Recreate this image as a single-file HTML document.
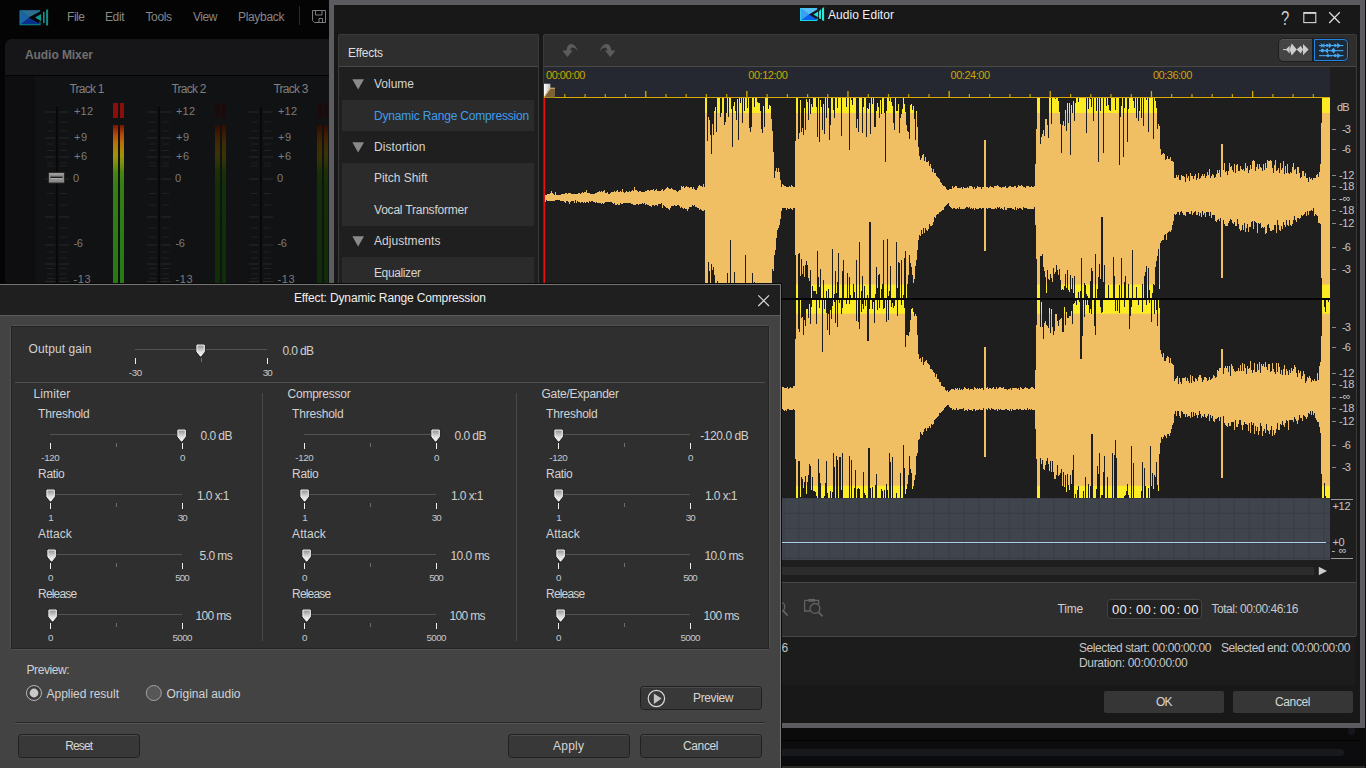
<!DOCTYPE html>
<html lang="en"><head><meta charset="utf-8"><title>Audio Editor</title>
<style>
html,body{margin:0;padding:0;background:#040404;}
body{width:1366px;height:768px;overflow:hidden;position:relative;font-family:"Liberation Sans",sans-serif;}
#root{position:absolute;left:0;top:0;width:1366px;height:768px;overflow:hidden;background:#040404;}
#root div,#root span.t,#root svg{position:absolute;}
span.t{white-space:pre;line-height:1;}
</style></head><body><div id="root">

<!-- main application window (dimmed) -->
<svg style="left:19px;top:8px" width="30" height="19" viewBox="0 0 30 19">
<rect x="1" y="2.2" width="20" height="14.4" fill="#082f8a"/>
<polygon points="1,2.2 21,2.2 21,5.4 10.5,9.6" fill="#2a7191"/>
<polygon points="1,2.2 10.5,9.6 1,16.6" fill="#1c62a6"/>
<polygon points="21,3.4 21,15.8 9.6,9.6" fill="#050505"/>
<polygon points="22.2,6 22.2,13.2 16,9.6" fill="#0f968f"/>
<path d="M0.8,16.7H21V13.4" fill="none" stroke="#0f8f96" stroke-width="1.1"/>
<path d="M1,2.2V16.8" fill="none" stroke="#187c96" stroke-width="1"/>
<rect x="24" y="3.8" width="1.6" height="11.3" fill="#0f9094"/>
<rect x="27.1" y="1.5" width="2" height="16" fill="#1a8a86"/>
</svg>
<span class="t" style="left:67.00px;top:11.14px;font-size:12px;color:#878787;letter-spacing:-0.440px;">File</span>
<span class="t" style="left:105.00px;top:11.14px;font-size:12px;color:#878787;letter-spacing:-0.400px;">Edit</span>
<span class="t" style="left:145.50px;top:11.14px;font-size:12px;color:#878787;letter-spacing:-0.380px;">Tools</span>
<span class="t" style="left:193.00px;top:11.14px;font-size:12px;color:#878787;letter-spacing:-0.433px;">View</span>
<span class="t" style="left:238.00px;top:11.14px;font-size:12px;color:#878787;letter-spacing:-0.326px;">Playback</span>
<div style="left:299px;top:6px;width:1px;height:19px;background:#2a2a2a;"></div>
<svg style="left:312px;top:10px" width="14" height="13" viewBox="0 0 14 13">
<path d="M0.5,0.5 H13.5 V12.5 H2.5 L0.5,10.5 Z M3.5,0.5 V5 H10 V0.5 M7,12.5 V8.5 H10.5 V12.5" fill="none" stroke="#7e7e7e" stroke-width="1"/>
</svg>
<div style="left:5px;top:39px;width:330px;height:250px;background:#0e0e10;border-radius:7px 0 0 0;"></div>
<div style="left:5px;top:39px;width:330px;height:36px;background:#161618;border-radius:7px 0 0 0;"></div>
<div style="left:5px;top:74.6px;width:330px;height:1.3px;background:#030303;"></div>
<div style="left:35px;top:76px;width:300px;height:212px;background:#111214;"></div>
<span class="t" style="left:25.00px;top:48.84px;font-size:12px;color:#707070;letter-spacing:-0.070px;font-weight:700;">Audio Mixer</span>
<span class="t" style="left:69.50px;top:82.84px;font-size:12px;color:#808080;letter-spacing:-0.790px;">Track 1</span>
<span class="t" style="left:74.00px;top:105.69px;font-size:11px;color:#7c7c7c;letter-spacing:0.178px;">+12</span>
<span class="t" style="left:74.00px;top:131.69px;font-size:11px;color:#7c7c7c;letter-spacing:0.460px;">+9</span>
<span class="t" style="left:74.00px;top:150.69px;font-size:11px;color:#7c7c7c;letter-spacing:0.460px;">+6</span>
<span class="t" style="left:73.00px;top:173.19px;font-size:11px;color:#7c7c7c;">0</span>
<span class="t" style="left:73.50px;top:237.69px;font-size:11px;color:#7c7c7c;letter-spacing:-0.290px;">-6</span>
<span class="t" style="left:73.50px;top:274.19px;font-size:11px;color:#7c7c7c;letter-spacing:0.553px;">-13</span>
<div style="left:56px;top:106.5px;width:2px;height:180px;background:#09090a;"></div>
<svg style="left:0;top:0" width="340" height="284" fill="#28292a"><rect x="45" y="111.5" width="10" height="1" /><rect x="59" y="111.5" width="10" height="1" /><rect x="45" y="137.5" width="10" height="1" /><rect x="59" y="137.5" width="10" height="1" /><rect x="45" y="156.5" width="10" height="1" /><rect x="59" y="156.5" width="10" height="1" /><rect x="45" y="178.5" width="10" height="1" /><rect x="59" y="178.5" width="10" height="1" /><rect x="45" y="216.5" width="10" height="1" /><rect x="59" y="216.5" width="10" height="1" /><rect x="45" y="244.5" width="10" height="1" /><rect x="59" y="244.5" width="10" height="1" /><rect x="45" y="263.5" width="10" height="1" /><rect x="59" y="263.5" width="10" height="1" /><rect x="45" y="281" width="10" height="1" /><rect x="59" y="281" width="10" height="1" /><rect x="47" y="121.5" width="7" height="1" opacity=".7"/><rect x="60" y="121.5" width="7" height="1" opacity=".7"/><rect x="47" y="130.5" width="7" height="1" opacity=".7"/><rect x="60" y="130.5" width="7" height="1" opacity=".7"/><rect x="47" y="143.5" width="7" height="1" opacity=".7"/><rect x="60" y="143.5" width="7" height="1" opacity=".7"/><rect x="47" y="150" width="7" height="1" opacity=".7"/><rect x="60" y="150" width="7" height="1" opacity=".7"/><rect x="47" y="162.5" width="7" height="1" opacity=".7"/><rect x="60" y="162.5" width="7" height="1" opacity=".7"/><rect x="47" y="165.5" width="7" height="1" opacity=".7"/><rect x="60" y="165.5" width="7" height="1" opacity=".7"/><rect x="47" y="193" width="7" height="1" opacity=".7"/><rect x="60" y="193" width="7" height="1" opacity=".7"/><rect x="47" y="204.5" width="7" height="1" opacity=".7"/><rect x="60" y="204.5" width="7" height="1" opacity=".7"/><rect x="47" y="227.5" width="7" height="1" opacity=".7"/><rect x="60" y="227.5" width="7" height="1" opacity=".7"/><rect x="47" y="236.5" width="7" height="1" opacity=".7"/><rect x="60" y="236.5" width="7" height="1" opacity=".7"/><rect x="47" y="251.5" width="7" height="1" opacity=".7"/><rect x="60" y="251.5" width="7" height="1" opacity=".7"/><rect x="47" y="257.5" width="7" height="1" opacity=".7"/><rect x="60" y="257.5" width="7" height="1" opacity=".7"/><rect x="47" y="268" width="7" height="1" opacity=".7"/><rect x="60" y="268" width="7" height="1" opacity=".7"/><rect x="47" y="273.5" width="7" height="1" opacity=".7"/><rect x="60" y="273.5" width="7" height="1" opacity=".7"/><rect x="47" y="278" width="7" height="1" opacity=".7"/><rect x="60" y="278" width="7" height="1" opacity=".7"/></svg>
<div style="left:113px;top:103px;width:4.5px;height:14.5px;background:#8a0f0c;"></div>
<div style="left:113px;top:124.5px;width:4.5px;height:160px;background:linear-gradient(to bottom,#7a1404 0px,#b04608 9px,#b87208 18px,#a49209 30px,#7f900e 38px,#488612 47px,#357f14 60px,#2c7d15 110px,#287814 160px);"></div>
<div style="left:119.5px;top:103px;width:4.5px;height:14.5px;background:#8a0f0c;"></div>
<div style="left:119.5px;top:124.5px;width:4.5px;height:160px;background:linear-gradient(to bottom,#7a1404 0px,#b04608 9px,#b87208 18px,#a49209 30px,#7f900e 38px,#488612 47px,#357f14 60px,#2c7d15 110px,#287814 160px);"></div>
<span class="t" style="left:171.50px;top:82.84px;font-size:12px;color:#808080;letter-spacing:-0.790px;">Track 2</span>
<span class="t" style="left:176.00px;top:105.69px;font-size:11px;color:#7c7c7c;letter-spacing:0.178px;">+12</span>
<span class="t" style="left:176.00px;top:131.69px;font-size:11px;color:#7c7c7c;letter-spacing:0.460px;">+9</span>
<span class="t" style="left:176.00px;top:150.69px;font-size:11px;color:#7c7c7c;letter-spacing:0.460px;">+6</span>
<span class="t" style="left:175.00px;top:173.19px;font-size:11px;color:#7c7c7c;">0</span>
<span class="t" style="left:175.50px;top:237.69px;font-size:11px;color:#7c7c7c;letter-spacing:-0.290px;">-6</span>
<span class="t" style="left:175.50px;top:274.19px;font-size:11px;color:#7c7c7c;letter-spacing:0.553px;">-13</span>
<div style="left:158px;top:106.5px;width:2px;height:180px;background:#09090a;"></div>
<svg style="left:0;top:0" width="340" height="284" fill="#28292a"><rect x="147" y="111.5" width="10" height="1" /><rect x="161" y="111.5" width="10" height="1" /><rect x="147" y="137.5" width="10" height="1" /><rect x="161" y="137.5" width="10" height="1" /><rect x="147" y="156.5" width="10" height="1" /><rect x="161" y="156.5" width="10" height="1" /><rect x="147" y="178.5" width="10" height="1" /><rect x="161" y="178.5" width="10" height="1" /><rect x="147" y="216.5" width="10" height="1" /><rect x="161" y="216.5" width="10" height="1" /><rect x="147" y="244.5" width="10" height="1" /><rect x="161" y="244.5" width="10" height="1" /><rect x="147" y="263.5" width="10" height="1" /><rect x="161" y="263.5" width="10" height="1" /><rect x="147" y="281" width="10" height="1" /><rect x="161" y="281" width="10" height="1" /><rect x="149" y="121.5" width="7" height="1" opacity=".7"/><rect x="162" y="121.5" width="7" height="1" opacity=".7"/><rect x="149" y="130.5" width="7" height="1" opacity=".7"/><rect x="162" y="130.5" width="7" height="1" opacity=".7"/><rect x="149" y="143.5" width="7" height="1" opacity=".7"/><rect x="162" y="143.5" width="7" height="1" opacity=".7"/><rect x="149" y="150" width="7" height="1" opacity=".7"/><rect x="162" y="150" width="7" height="1" opacity=".7"/><rect x="149" y="162.5" width="7" height="1" opacity=".7"/><rect x="162" y="162.5" width="7" height="1" opacity=".7"/><rect x="149" y="165.5" width="7" height="1" opacity=".7"/><rect x="162" y="165.5" width="7" height="1" opacity=".7"/><rect x="149" y="193" width="7" height="1" opacity=".7"/><rect x="162" y="193" width="7" height="1" opacity=".7"/><rect x="149" y="204.5" width="7" height="1" opacity=".7"/><rect x="162" y="204.5" width="7" height="1" opacity=".7"/><rect x="149" y="227.5" width="7" height="1" opacity=".7"/><rect x="162" y="227.5" width="7" height="1" opacity=".7"/><rect x="149" y="236.5" width="7" height="1" opacity=".7"/><rect x="162" y="236.5" width="7" height="1" opacity=".7"/><rect x="149" y="251.5" width="7" height="1" opacity=".7"/><rect x="162" y="251.5" width="7" height="1" opacity=".7"/><rect x="149" y="257.5" width="7" height="1" opacity=".7"/><rect x="162" y="257.5" width="7" height="1" opacity=".7"/><rect x="149" y="268" width="7" height="1" opacity=".7"/><rect x="162" y="268" width="7" height="1" opacity=".7"/><rect x="149" y="273.5" width="7" height="1" opacity=".7"/><rect x="162" y="273.5" width="7" height="1" opacity=".7"/><rect x="149" y="278" width="7" height="1" opacity=".7"/><rect x="162" y="278" width="7" height="1" opacity=".7"/></svg>
<div style="left:215px;top:103px;width:4.5px;height:14.5px;background:#1d0a0a;"></div>
<div style="left:215px;top:124.5px;width:4.5px;height:160px;background:linear-gradient(to bottom,#330a02 0px,#3d1c03 9px,#3f2a03 18px,#3a3304 30px,#2c3305 38px,#1a3006 47px,#132f07 60px,#0f2d08 160px);"></div>
<div style="left:221.5px;top:103px;width:4.5px;height:14.5px;background:#1d0a0a;"></div>
<div style="left:221.5px;top:124.5px;width:4.5px;height:160px;background:linear-gradient(to bottom,#330a02 0px,#3d1c03 9px,#3f2a03 18px,#3a3304 30px,#2c3305 38px,#1a3006 47px,#132f07 60px,#0f2d08 160px);"></div>
<span class="t" style="left:273.50px;top:82.84px;font-size:12px;color:#808080;letter-spacing:-0.790px;">Track 3</span>
<span class="t" style="left:278.00px;top:105.69px;font-size:11px;color:#7c7c7c;letter-spacing:0.178px;">+12</span>
<span class="t" style="left:278.00px;top:131.69px;font-size:11px;color:#7c7c7c;letter-spacing:0.460px;">+9</span>
<span class="t" style="left:278.00px;top:150.69px;font-size:11px;color:#7c7c7c;letter-spacing:0.460px;">+6</span>
<span class="t" style="left:277.00px;top:173.19px;font-size:11px;color:#7c7c7c;">0</span>
<span class="t" style="left:277.50px;top:237.69px;font-size:11px;color:#7c7c7c;letter-spacing:-0.290px;">-6</span>
<span class="t" style="left:277.50px;top:274.19px;font-size:11px;color:#7c7c7c;letter-spacing:0.553px;">-13</span>
<div style="left:260px;top:106.5px;width:2px;height:180px;background:#09090a;"></div>
<svg style="left:0;top:0" width="340" height="284" fill="#28292a"><rect x="249" y="111.5" width="10" height="1" /><rect x="263" y="111.5" width="10" height="1" /><rect x="249" y="137.5" width="10" height="1" /><rect x="263" y="137.5" width="10" height="1" /><rect x="249" y="156.5" width="10" height="1" /><rect x="263" y="156.5" width="10" height="1" /><rect x="249" y="178.5" width="10" height="1" /><rect x="263" y="178.5" width="10" height="1" /><rect x="249" y="216.5" width="10" height="1" /><rect x="263" y="216.5" width="10" height="1" /><rect x="249" y="244.5" width="10" height="1" /><rect x="263" y="244.5" width="10" height="1" /><rect x="249" y="263.5" width="10" height="1" /><rect x="263" y="263.5" width="10" height="1" /><rect x="249" y="281" width="10" height="1" /><rect x="263" y="281" width="10" height="1" /><rect x="251" y="121.5" width="7" height="1" opacity=".7"/><rect x="264" y="121.5" width="7" height="1" opacity=".7"/><rect x="251" y="130.5" width="7" height="1" opacity=".7"/><rect x="264" y="130.5" width="7" height="1" opacity=".7"/><rect x="251" y="143.5" width="7" height="1" opacity=".7"/><rect x="264" y="143.5" width="7" height="1" opacity=".7"/><rect x="251" y="150" width="7" height="1" opacity=".7"/><rect x="264" y="150" width="7" height="1" opacity=".7"/><rect x="251" y="162.5" width="7" height="1" opacity=".7"/><rect x="264" y="162.5" width="7" height="1" opacity=".7"/><rect x="251" y="165.5" width="7" height="1" opacity=".7"/><rect x="264" y="165.5" width="7" height="1" opacity=".7"/><rect x="251" y="193" width="7" height="1" opacity=".7"/><rect x="264" y="193" width="7" height="1" opacity=".7"/><rect x="251" y="204.5" width="7" height="1" opacity=".7"/><rect x="264" y="204.5" width="7" height="1" opacity=".7"/><rect x="251" y="227.5" width="7" height="1" opacity=".7"/><rect x="264" y="227.5" width="7" height="1" opacity=".7"/><rect x="251" y="236.5" width="7" height="1" opacity=".7"/><rect x="264" y="236.5" width="7" height="1" opacity=".7"/><rect x="251" y="251.5" width="7" height="1" opacity=".7"/><rect x="264" y="251.5" width="7" height="1" opacity=".7"/><rect x="251" y="257.5" width="7" height="1" opacity=".7"/><rect x="264" y="257.5" width="7" height="1" opacity=".7"/><rect x="251" y="268" width="7" height="1" opacity=".7"/><rect x="264" y="268" width="7" height="1" opacity=".7"/><rect x="251" y="273.5" width="7" height="1" opacity=".7"/><rect x="264" y="273.5" width="7" height="1" opacity=".7"/><rect x="251" y="278" width="7" height="1" opacity=".7"/><rect x="264" y="278" width="7" height="1" opacity=".7"/></svg>
<div style="left:317px;top:103px;width:4.5px;height:14.5px;background:#1d0a0a;"></div>
<div style="left:317px;top:124.5px;width:4.5px;height:160px;background:linear-gradient(to bottom,#330a02 0px,#3d1c03 9px,#3f2a03 18px,#3a3304 30px,#2c3305 38px,#1a3006 47px,#132f07 60px,#0f2d08 160px);"></div>
<div style="left:323.5px;top:103px;width:4.5px;height:14.5px;background:#1d0a0a;"></div>
<div style="left:323.5px;top:124.5px;width:4.5px;height:160px;background:linear-gradient(to bottom,#330a02 0px,#3d1c03 9px,#3f2a03 18px,#3a3304 30px,#2c3305 38px,#1a3006 47px,#132f07 60px,#0f2d08 160px);"></div>
<svg style="left:47px;top:171px" width="19" height="14" viewBox="0 0 19 14">
<rect x="1.5" y="1.5" width="16" height="10.5" rx="1" fill="#8a8a8a" stroke="#2a2a2a" stroke-width="1"/>
<rect x="2.5" y="2.3" width="14" height="1.2" fill="#a9a9a9"/>
<rect x="3.5" y="5.6" width="12" height="1.6" fill="#1c1c1c"/>
<rect x="3.5" y="7.2" width="12" height="1" fill="#b8b8b8"/>
</svg>
<div style="left:782px;top:728px;width:584px;height:40px;background:#0b0b0b;"></div>
<div style="left:782px;top:739.6px;width:579px;height:26px;background:#0c0c0e;border-radius:0 0 9px 0;border-top:1px solid #040404;box-sizing:border-box;"></div>
<div style="left:782px;top:749.2px;width:562px;height:7px;background:#18191d;border-radius:0 3.5px 3.5px 0;"></div>
<div style="left:1348px;top:727px;width:7px;height:8px;background:#15161a;border-radius:0 0 3.5px 3.5px;"></div>
<div style="left:782px;top:766.4px;width:584px;height:1.6px;background:#2b2a27;"></div>
<!-- Audio Editor window -->
<div style="left:329px;top:0px;width:1036px;height:728px;background:#5b5b60;"></div>
<div style="left:334px;top:4.5px;width:1026px;height:718.5px;background:#181818;"></div>
<div style="left:1365px;top:0px;width:1px;height:768px;background:#0c0c0c;"></div>
<svg style="left:799px;top:6px" width="27" height="17" viewBox="0 0 27 17">
<rect x="1.1" y="2" width="17" height="13" fill="#0c60ee"/>
<polygon points="1.1,2 18.1,2 18.1,4.8 9.8,8.4" fill="#52c0f5"/>
<polygon points="1.1,2 9.8,8.4 1.1,15" fill="#3f9ef5"/>
<polygon points="18.1,3.6 18.1,13.4 10,8.4" fill="#181818"/>
<polygon points="19.2,5.4 19.2,11.2 14.4,8.4" fill="#19e2e4"/>
<path d="M1,14.5H18.1V12.4" fill="none" stroke="#19d8e0" stroke-width="1"/>
<path d="M1.5,2V15" fill="none" stroke="#2ccdf0" stroke-width="1"/>
<path d="M20,5.2 L22,3.1 V13.1 L20,12.4Z" fill="#19e6e6"/>
<path d="M23,2.6 L25.1,1.1 V15.1 L23,14.2Z" fill="#2ee6d6"/>
</svg>
<span class="t" style="left:828.00px;top:8.84px;font-size:12px;color:#f2f2f2;letter-spacing:0.055px;">Audio Editor</span>
<span class="t" style="left:1280.80px;top:10.24px;font-size:18.5px;color:#cdcdcd;transform:scale(.8,1.07);transform-origin:0 85%;">?</span>
<svg style="left:1300px;top:8px" width="44" height="20" viewBox="0 0 44 20">
<rect x="3.8" y="4.6" width="12" height="10" fill="none" stroke="#d6d6d6" stroke-width="1.1"/>
<rect x="3.8" y="4.2" width="12" height="1.6" fill="#dcdcdc"/>
<path d="M29.2,4.3 L39.8,15 M39.8,4.3 L29.2,15" stroke="#dcdcdc" stroke-width="1.25" fill="none"/>
</svg>
<div style="left:337.5px;top:34px;width:201px;height:254px;background:#1f1f1f;border:1px solid #3a3a38;border-bottom:0;box-sizing:border-box;border-radius:2px 2px 0 0;"></div>
<div style="left:338.5px;top:35px;width:199px;height:31px;background:#2e2e2e;"></div>
<div style="left:338.5px;top:66px;width:199px;height:1px;background:#484844;"></div>
<span class="t" style="left:348.00px;top:46.84px;font-size:12px;color:#dedede;letter-spacing:-0.247px;">Effects</span>
<svg style="left:352px;top:79px" width="13" height="11" viewBox="0 0 13 11"><polygon points="0.3,0.3 12,0.3 6.15,10.4" fill="#8a8a8a"/></svg>
<span class="t" style="left:374.00px;top:77.84px;font-size:12px;color:#d4d4d4;">Volume</span>
<div style="left:342px;top:100px;width:191.5px;height:31px;background:#2b2b2b;"></div>
<span class="t" style="left:374.00px;top:109.84px;font-size:12px;color:#3f9cec;letter-spacing:-0.172px;">Dynamic Range Compression</span>
<svg style="left:352px;top:142px" width="13" height="11" viewBox="0 0 13 11"><polygon points="0.3,0.3 12,0.3 6.15,10.4" fill="#8a8a8a"/></svg>
<span class="t" style="left:374.00px;top:141.04px;font-size:12px;color:#d4d4d4;letter-spacing:0.089px;">Distortion</span>
<div style="left:342px;top:163px;width:191.5px;height:62.5px;background:#2b2b2b;"></div>
<span class="t" style="left:374.00px;top:172.44px;font-size:12px;color:#d4d4d4;letter-spacing:-0.050px;">Pitch Shift</span>
<span class="t" style="left:374.00px;top:203.64px;font-size:12px;color:#d4d4d4;letter-spacing:-0.211px;">Vocal Transformer</span>
<svg style="left:352px;top:236px" width="13" height="11" viewBox="0 0 13 11"><polygon points="0.3,0.3 12,0.3 6.15,10.4" fill="#8a8a8a"/></svg>
<span class="t" style="left:374.00px;top:235.14px;font-size:12px;color:#d4d4d4;letter-spacing:0.044px;">Adjustments</span>
<div style="left:342px;top:257px;width:191.5px;height:31px;background:#2b2b2b;"></div>
<span class="t" style="left:374.00px;top:266.64px;font-size:12px;color:#d4d4d4;letter-spacing:-0.380px;">Equalizer</span>
<div style="left:543px;top:34px;width:814px;height:602.5px;background:#1e1e1e;border:1px solid #3a3a38;box-sizing:border-box;border-radius:2px;"></div>
<div style="left:544px;top:35px;width:812px;height:31px;background:#2e2e2e;"></div>
<div style="left:544px;top:66px;width:812px;height:1px;background:#484844;"></div>
<svg style="left:560px;top:42px" width="60" height="18" viewBox="560 42 60 18">
<g fill="#5c5c5c">
<path d="M578,51.2 C576.5,46.5 573.5,44 571,44 C568.5,44 567,46 566.5,50.3 L562.3,50.8 L567.5,57 L572.8,50.6 L570.3,50.5 C570.6,48.6 571.3,47.6 572.6,47.6 C574.3,47.6 576,48.8 578,51.2 Z"/>
<path transform="translate(1177.7,0) scale(-1,1)" d="M578,51.2 C576.5,46.5 573.5,44 571,44 C568.5,44 567,46 566.5,50.3 L562.3,50.8 L567.5,57 L572.8,50.6 L570.3,50.5 C570.6,48.6 571.3,47.6 572.6,47.6 C574.3,47.6 576,48.8 578,51.2 Z"/>
</g></svg>
<div style="left:1277.6px;top:37.5px;width:71.4px;height:24.5px;background:#1d1d1d;border-radius:6px;"></div>
<div style="left:1279px;top:39px;width:33.2px;height:22px;background:#444444;border-radius:4.5px 0 0 4.5px;border-top:1px solid #555;box-sizing:border-box;"></div>
<div style="left:1313.8px;top:39px;width:34.2px;height:22px;background:#1c2936;border:1.3px solid #2284e4;box-sizing:border-box;border-radius:0 4px 4px 0;"></div>
<svg style="left:1280px;top:40px" width="68" height="20" viewBox="1280 40 68 20">
<g fill="#cdcdcd"><rect x="1283" y="49.1" width="4" height="1"/>
<polygon points="1285.8,49.6 1289.6,45.7 1289.6,53.5"/>
<polygon points="1289.6,49.6 1291.7,43.6 1296.8,49.6 1291.7,55.6"/>
<polygon points="1296.6,49.6 1300.9,45.7 1302.8,49.6 1300.9,53.5"/>
<polygon points="1303,44 1308.6,49.6 1303,55.2"/><rect x="1302.4" y="48.6" width="1.2" height="2"/></g>
<g fill="#45aaf6"><rect x="1319" y="45" width="24.4" height="1.1"/><rect x="1319" y="50.1" width="24.4" height="1.1"/><rect x="1319" y="55.1" width="24.4" height="1.1"/>
<path d="M1320.6,43 L1322.7,44.8 L1324.8,43 L1324,45.5 L1324.8,48 L1322.7,46.4 L1320.6,48 L1321.4,45.5Z"/>
<circle cx="1327.2" cy="45.5" r="1.4"/><polygon points="1328.8,42.8 1332.2,45.5 1328.8,48.3"/><circle cx="1335.2" cy="45.5" r="1.4"/><polygon points="1337.2,42.8 1340.8,45.5 1337.2,48.3"/>
<circle cx="1322.4" cy="50.6" r="1.8"/><polygon points="1328,47.9 1328,53.4 1324.4,50.6"/><polygon points="1331,50.6 1333.6,47.8 1335.8,50.6 1333.6,53.4"/>
<circle cx="1328" cy="55.6" r="1.5"/><circle cx="1330.9" cy="55.6" r="0.9"/><circle cx="1335.2" cy="55.6" r="1.5"/><polygon points="1337.2,52.9 1340.8,55.6 1337.2,58.4"/>
</g></svg>
<div style="left:544px;top:67px;width:786px;height:30px;background:#252830;"></div>
<svg style="left:544px;top:67px" width="786" height="31"><rect x="-0.1" y="24" width="1.3" height="6" fill="#d6ac00"/><rect x="20.2" y="27" width="1.2" height="3.4" fill="#c8a000"/><rect x="40.5" y="27" width="1.2" height="3.4" fill="#c8a000"/><rect x="60.7" y="27" width="1.2" height="3.4" fill="#c8a000"/><rect x="80.9" y="27" width="1.2" height="3.4" fill="#c8a000"/><rect x="101.1" y="24" width="1.3" height="6" fill="#d6ac00"/><rect x="121.4" y="27" width="1.2" height="3.4" fill="#c8a000"/><rect x="141.6" y="27" width="1.2" height="3.4" fill="#c8a000"/><rect x="161.8" y="27" width="1.2" height="3.4" fill="#c8a000"/><rect x="182.1" y="27" width="1.2" height="3.4" fill="#c8a000"/><rect x="202.2" y="24" width="1.3" height="6" fill="#d6ac00"/><rect x="222.5" y="27" width="1.2" height="3.4" fill="#c8a000"/><rect x="242.8" y="27" width="1.2" height="3.4" fill="#c8a000"/><rect x="263.0" y="27" width="1.2" height="3.4" fill="#c8a000"/><rect x="283.2" y="27" width="1.2" height="3.4" fill="#c8a000"/><rect x="303.3" y="24" width="1.3" height="6" fill="#d6ac00"/><rect x="323.7" y="27" width="1.2" height="3.4" fill="#c8a000"/><rect x="343.9" y="27" width="1.2" height="3.4" fill="#c8a000"/><rect x="364.1" y="27" width="1.2" height="3.4" fill="#c8a000"/><rect x="384.4" y="27" width="1.2" height="3.4" fill="#c8a000"/><rect x="404.5" y="24" width="1.3" height="6" fill="#d6ac00"/><rect x="424.8" y="27" width="1.2" height="3.4" fill="#c8a000"/><rect x="445.1" y="27" width="1.2" height="3.4" fill="#c8a000"/><rect x="465.3" y="27" width="1.2" height="3.4" fill="#c8a000"/><rect x="485.5" y="27" width="1.2" height="3.4" fill="#c8a000"/><rect x="505.6" y="24" width="1.3" height="6" fill="#d6ac00"/><rect x="526.0" y="27" width="1.2" height="3.4" fill="#c8a000"/><rect x="546.2" y="27" width="1.2" height="3.4" fill="#c8a000"/><rect x="566.4" y="27" width="1.2" height="3.4" fill="#c8a000"/><rect x="586.7" y="27" width="1.2" height="3.4" fill="#c8a000"/><rect x="606.8" y="24" width="1.3" height="6" fill="#d6ac00"/><rect x="627.1" y="27" width="1.2" height="3.4" fill="#c8a000"/><rect x="647.4" y="27" width="1.2" height="3.4" fill="#c8a000"/><rect x="667.6" y="27" width="1.2" height="3.4" fill="#c8a000"/><rect x="687.8" y="27" width="1.2" height="3.4" fill="#c8a000"/><rect x="708.0" y="24" width="1.3" height="6" fill="#d6ac00"/><rect x="728.3" y="27" width="1.2" height="3.4" fill="#c8a000"/><rect x="748.5" y="27" width="1.2" height="3.4" fill="#c8a000"/><rect x="768.7" y="27" width="1.2" height="3.4" fill="#c8a000"/></svg>
<span class="t" style="left:546.00px;top:69.69px;font-size:11px;color:#cda700;letter-spacing:-0.478px;">00:00:00</span>
<span class="t" style="left:748.30px;top:69.69px;font-size:11px;color:#cda700;letter-spacing:-0.478px;">00:12:00</span>
<span class="t" style="left:950.60px;top:69.69px;font-size:11px;color:#cda700;letter-spacing:-0.478px;">00:24:00</span>
<span class="t" style="left:1152.90px;top:69.69px;font-size:11px;color:#cda700;letter-spacing:-0.478px;">00:36:00</span>
<svg style="left:0;top:0" width="1366" height="500" viewBox="0 0 1366 500" shape-rendering="crispEdges">
<defs><clipPath id="cmid"><rect x="540" y="113" width="800" height="171.6"/><rect x="540" y="313.8" width="800" height="172"/></clipPath></defs>
<g fill="#fbec24"><path d="M544,197.5V195h1h1h1V194h1h1h1V193h1V191h1V193h1V194h1V195h1V192h1V195h1h1h1h1h1V194h1h1h1h1V193h1h1V194h1V193h1h1h1V194h1h1h1h1h1h1h1V193h1h1V194h1V193h1V192h1V193h1V192h1h1V190h1V193h1h1h1V194h1h1h1h1h1V193h1h1V192h1h1V191h1V192h1V191h1V192h1V191h1V190h1V193h1h1V192h1V194h1h1V193h1V192h1h1h1V191h1V192h1V191h1V190h1V192h1h1V191h1V192h1V189h1V192h1V193h1V192h1V191h1V192h1h1V191h1V192h1V191h1V190h1V191h1V187h1V190h1h1V191h1V192h1V191h1h1V192h1h1h1h1V191h1h1V190h1h1V191h1V190h1h1h1V189h1V191h1V190h1V189h1V191h1h1h1h1V190h1V189h1V191h1V190h1V189h1V188h1V187h1V188h1V189h1h1V188h1V189h1V190h1h1h1V191h1V192h1V191h1V190h1h1V186h1V187h1V186h1V188h1V187h1V186h1V187h1h1V188h1V187h1h1V189h1V187h1V189h1V190h1h1V188h1V186h1V185h1V186h1h1V187h1V184h1V187h1V97h1h1V141h1V117h1V120h1V135h1V154h1V124h1V135h1V111h1V107h1V132h1V97h1h1h1V117h1V113h1V97h1h1V125h1V122h1V113h1V97h1V117h1V97h1h1V109h1V147h1V106h1V102h1V111h1V120h1V99h1V140h1V97h1V103h1V97h1V123h1V97h1V111h1V97h1h1V108h1V97h1V128h1V132h1V127h1V97h1h1V107h1V97h1h1V102h1V103h1h1V111h1V129h1V133h1V106h1V127h1V97h1h1h1V109h1V105h1V106h1V119h1V131h1V152h1V178h1V171h1V168h1V172h1V168h1V172h1V180h1V187h1V184h1V185h1V186h1h1V187h1h1h1V186h1V187h1V185h1V186h1V187h1h1V141h1V97h1h1V139h1V133h1V100h1V132h1V128h1V135h1V108h1V130h1V99h1V102h1V120h1V99h1V114h1V104h1V107h1V97h1h1h1V107h1V137h1V97h1V142h1V100h1V107h1V130h1V104h1V134h1V97h1V118h1V97h1V108h1V140h1V125h1V97h1h1V110h1V118h1V97h1h1V108h1V97h1h1h1V136h1V97h1h1h1h1V107h1V97h1h1V150h1V97h1V100h1V105h1V97h1h1h1V128h1V119h1V132h1V97h1h1h1V133h1V107h1V97h1h1V137h1V108h1V109h1V103h1V134h1V97h1V104h1V97h1V127h1h1V111h1V103h1V107h1V118h1V100h1V114h1V97h1h1V113h1V162h1V111h1V97h1h1V101h1V97h1V102h1V106h1V123h1V130h1V97h1V111h1h1V104h1V133h1V118h1V114h1V109h1V97h1V104h1V112h1V125h1V131h1V132h1V139h1V105h1V104h1V110h1V106h1V119h1V140h1V111h1V127h1V147h1V156h1V160h1V158h1V155h1V154h1V161h1V157h1V162h1h1V161h1V166h1V164h1V168h1V172h1V169h1V173h1h1V176h1V177h1V178h1V179h1V182h1V183h1V185h1V186h1h1V187h1V189h1V190h1h1V189h1h1h1V186h1V188h1V187h1V186h1h1V188h1h1h1h1V187h1V189h1V187h1V188h1h1h1V187h1V188h1V186h1h1h1V187h1V189h1V187h1V189h1V188h1V186h1V187h1h1h1V189h1V187h1h1V140h1h1V187h1h1V188h1V187h1V186h1V187h1h1V188h1V186h1h1h1V185h1V186h1V187h1h1V188h1V187h1h1h1V186h1V188h1h1V187h1V186h1h1V187h1h1h1V186h1h1V188h1V187h1V185h1V186h1h1V185h1V186h1V187h1h1V188h1V186h1h1h1V187h1h1V186h1V187h1h1V186h1V164h1V129h1V97h1h1h1V144h1V137h1V134h1V130h1V136h1V119h1h1V125h1V138h1V98h1V97h1V124h1V98h1h1V97h1V99h1V97h1V98h1V101h1V112h1V124h1V153h1V125h1V121h1V126h1V110h1V131h1V103h1V123h1V103h1V155h1V105h1V113h1V101h1V121h1V103h1V97h1h1V102h1V97h1h1h1h1h1h1h1V133h1V97h1V109h1V97h1V99h1V107h1V97h1V121h1V97h1h1V111h1V97h1V162h1V97h1V111h1V97h1h1V153h1V97h1h1V106h1V97h1V105h1V110h1V111h1V97h1h1h1h1V110h1V97h1h1h1V165h1V117h1V106h1V97h1V157h1V108h1V97h1h1V142h1V109h1V97h1h1h1h1V101h1V108h1V97h1V118h1V97h1V121h1V111h1V97h1V118h1V97h1V126h1V97h1h1V100h1V97h1V132h1V97h1h1h1h1V139h1V97h1V101h1V108h1V129h1V124h1V126h1V149h1V155h1V154h1V153h1V154h1V160h1V159h1V156h1V159h1h1V157h1V161h1h1V162h1V178h1h1V175h1V177h1V175h1V180h1h1V175h1V176h1h1V177h1V182h1V174h1V178h1V176h1V181h1V173h1V176h1h1V179h1V176h1V174h1V180h1V178h1V173h1V179h1V178h1V176h1V174h1V176h1V174h1V178h1V176h1V172h1V175h1V169h1V178h1V176h1V174h1V175h1V178h1V177h1V174h1V170h1V173h1V170h1V177h1V144h1h1V170h1V163h1V172h1V171h1V175h1V171h1V163h1V167h1V166h1V170h1V172h1V164h1V173h1V165h1V164h1V171h1h1V166h1V169h1V170h1V169h1V171h1V163h1V168h1V166h1V173h1V170h1V165h1V169h1V161h1V160h1V161h1V171h1V167h1V164h1V169h1V164h1V167h1V168h1V171h1V164h1V170h1V163h1V168h1V160h1V161h1h1V160h1V161h1V168h1V173h1V165h1V160h1V171h1V170h1V168h1V173h1V163h1V170h1V168h1V161h1V174h1V166h1V173h1V164h1V173h1V174h1V172h1V173h1V167h1V163h1V170h1V169h1V174h1V167h1h1V173h1V178h1V177h1V171h1h1V176h1V173h1V178h1h1V182h1V177h1V179h1V178h1V180h1V178h1h1h1V175h1V174h1V177h1V172h1V164h1V123h1V97h1h1h1h1h1h1h1h1V197.5V298h-1h-1h-1h-1h-1h-1h-1h-1V278h-1V224h-1V223h-1h-1V216h-1V215h-1V214h-1V216h-1V208h-1V211h-1V210h-1V211h-1h-1V215h-1V211h-1V216h-1V212h-1V214h-1V215h-1V216h-1V215h-1V218h-1V219h-1V218h-1h-1V222h-1V220h-1V216h-1V220h-1V224h-1V226h-1V225h-1V220h-1V226h-1V225h-1V220h-1V227h-1V225h-1V222h-1V229h-1V226h-1V231h-1V230h-1V225h-1V220h-1V233h-1V225h-1h-1V230h-1h-1V231h-1h-1V228h-1V224h-1V225h-1V233h-1V234h-1V227h-1V228h-1V227h-1V228h-1V223h-1V224h-1V223h-1V233h-1V223h-1V222h-1V221h-1V229h-1V221h-1V222h-1V227h-1h-1V232h-1V224h-1V228h-1V232h-1V223h-1V230h-1V225h-1V230h-1V231h-1V229h-1V224h-1V219h-1V226h-1h-1V222h-1V224h-1V223h-1V220h-1V219h-1V221h-1V223h-1V226h-1h-1h-1V224h-1V220h-1V278h-1h-1V218h-1V221h-1V219h-1V220h-1V222h-1V221h-1V215h-1h-1h-1V218h-1V212h-1V216h-1V212h-1h-1h-1V217h-1V213h-1V215h-1V211h-1V217h-1V213h-1V216h-1V212h-1V215h-1h-1V211h-1V212h-1V213h-1V215h-1V211h-1V214h-1h-1V212h-1h-1h-1V216h-1V215h-1h-1V213h-1V211h-1V212h-1V215h-1V212h-1h-1V214h-1V215h-1V214h-1V221h-1V225h-1V230h-1V232h-1V231h-1V232h-1V233h-1V240h-1V234h-1V235h-1V240h-1h-1V241h-1V243h-1V289h-1V249h-1V256h-1V261h-1V267h-1V285h-1V284h-1V293h-1V298h-1h-1V290h-1V268h-1V298h-1V266h-1V272h-1V276h-1V298h-1V284h-1V298h-1h-1h-1h-1h-1V287h-1V298h-1h-1h-1V250h-1V298h-1h-1h-1V284h-1V298h-1h-1V276h-1V282h-1V298h-1h-1V258h-1V298h-1V285h-1V298h-1h-1h-1h-1V276h-1V257h-1V298h-1h-1h-1h-1V285h-1V298h-1h-1h-1V265h-1V282h-1V217h-1h-1V279h-1V264h-1V277h-1V289h-1V298h-1V254h-1V298h-1h-1V271h-1V268h-1V281h-1V298h-1h-1V296h-1V294h-1V285h-1V283h-1V298h-1h-1V258h-1V291h-1V298h-1V292h-1V298h-1h-1h-1V276h-1V293h-1V278h-1V289h-1V275h-1V292h-1V290h-1V270h-1V288h-1V274h-1V286h-1V290h-1V289h-1V290h-1V280h-1V269h-1V275h-1V270h-1V265h-1V272h-1V274h-1V268h-1V282h-1V278h-1V274h-1V280h-1V279h-1V270h-1V293h-1V277h-1V271h-1V267h-1V254h-1V256h-1h-1V298h-1h-1h-1V259h-1V225h-1V207h-1V209h-1h-1h-1h-1h-1h-1h-1V208h-1h-1h-1V207h-1V210h-1V209h-1V208h-1h-1V209h-1V208h-1V210h-1V207h-1V210h-1V209h-1h-1V208h-1h-1h-1h-1h-1V210h-1h-1V207h-1V210h-1V209h-1V208h-1V209h-1V207h-1V208h-1V207h-1V209h-1V208h-1V209h-1h-1h-1h-1V208h-1h-1h-1V209h-1V208h-1V251h-1h-1V208h-1h-1V209h-1V208h-1h-1V209h-1h-1h-1V208h-1V210h-1V208h-1V209h-1V208h-1V209h-1V207h-1V208h-1V207h-1h-1V208h-1V209h-1h-1h-1h-1h-1V207h-1V209h-1V208h-1V209h-1h-1V208h-1h-1V209h-1V208h-1V207h-1V206h-1V203h-1V204h-1V205h-1V206h-1V207h-1V210h-1h-1V211h-1V212h-1h-1V214h-1h-1V215h-1V218h-1V217h-1V222h-1V225h-1V226h-1h-1V224h-1V229h-1V231h-1V230h-1V228h-1V233h-1V228h-1V234h-1V230h-1V236h-1V235h-1V240h-1V250h-1V260h-1V266h-1V279h-1V283h-1V275h-1V267h-1V263h-1V255h-1V275h-1V284h-1V298h-1V251h-1V258h-1V295h-1V298h-1V260h-1V298h-1V263h-1V262h-1V288h-1V242h-1V298h-1h-1h-1h-1h-1V266h-1V291h-1V296h-1V239h-1V298h-1h-1h-1V240h-1V284h-1V289h-1V298h-1V274h-1V275h-1V288h-1V267h-1V294h-1V298h-1h-1h-1h-1V222h-1h-1V298h-1V295h-1V298h-1h-1V286h-1V298h-1V276h-1V291h-1V298h-1V242h-1V298h-1h-1V260h-1V298h-1V292h-1V284h-1V298h-1h-1V295h-1V277h-1V298h-1V273h-1V298h-1h-1h-1V260h-1V271h-1V298h-1h-1h-1V253h-1V282h-1V293h-1V271h-1V294h-1V298h-1V249h-1V298h-1h-1h-1V289h-1V298h-1V291h-1V298h-1h-1V280h-1V298h-1h-1V269h-1V287h-1V277h-1V251h-1V294h-1V291h-1h-1h-1V286h-1V298h-1V270h-1V281h-1V278h-1V265h-1V261h-1V265h-1V277h-1V266h-1V274h-1V259h-1V276h-1V253h-1V254h-1V298h-1h-1V255h-1V208h-1h-1V210h-1V209h-1V208h-1V209h-1h-1V208h-1V210h-1V208h-1h-1h-1h-1V211h-1V219h-1V225h-1V228h-1V230h-1V238h-1V250h-1V255h-1V271h-1V269h-1V286h-1V290h-1V295h-1V287h-1V298h-1h-1h-1h-1h-1h-1h-1h-1h-1h-1h-1V288h-1V298h-1V282h-1V298h-1V273h-1V298h-1h-1V293h-1h-1V298h-1h-1V255h-1V294h-1V287h-1V284h-1h-1V298h-1h-1h-1h-1h-1h-1V272h-1V298h-1V285h-1V298h-1V240h-1V298h-1V283h-1V273h-1V298h-1h-1V294h-1V298h-1h-1h-1h-1h-1h-1V281h-1V289h-1V285h-1V275h-1V267h-1V270h-1V264h-1V293h-1V271h-1V262h-1V296h-1V298h-1h-1V210h-1V211h-1h-1V210h-1V209h-1V210h-1V208h-1h-1V207h-1h-1V205h-1V206h-1V205h-1V207h-1h-1h-1V209h-1V211h-1V209h-1h-1V208h-1V209h-1V208h-1V207h-1V208h-1V206h-1V205h-1h-1V206h-1h-1V205h-1V206h-1h-1h-1V208h-1V210h-1V209h-1V208h-1h-1V207h-1V206h-1V205h-1V208h-1V203h-1V204h-1h-1h-1V206h-1V205h-1h-1V206h-1V205h-1h-1V207h-1V206h-1h-1V205h-1h-1V204h-1V205h-1V203h-1V204h-1V203h-1V204h-1h-1h-1V205h-1V204h-1h-1V205h-1h-1h-1V204h-1h-1V203h-1h-1h-1h-1h-1h-1h-1h-1V204h-1h-1V203h-1V205h-1h-1V204h-1V205h-1h-1V203h-1V204h-1V203h-1V202h-1h-1h-1h-1h-1h-1h-1V203h-1V204h-1V203h-1V204h-1V203h-1h-1h-1h-1V202h-1V203h-1V202h-1h-1V201h-1h-1V202h-1V201h-1V203h-1V202h-1h-1V203h-1V202h-1V203h-1V202h-1h-1V203h-1V202h-1h-1V201h-1V203h-1V200h-1V203h-1V201h-1h-1h-1V202h-1V204h-1V202h-1V201h-1h-1V203h-1V202h-1V201h-1h-1h-1h-1V200h-1h-1h-1h-1h-1V201h-1h-1h-1h-1h-1h-1h-1h-1V200h-1V202h-1V200h-1Z"/><path d="M544,398.8V396h1h1V393h1h1V395h1V394h1V395h1h1h1V396h1h1h1h1h1h1h1h1V395h1h1h1h1V393h1V395h1V394h1V395h1V394h1V395h1h1V396h1h1V395h1V396h1V393h1V395h1h1h1h1V394h1V393h1V395h1V393h1V394h1h1h1h1h1V393h1V396h1V395h1h1V392h1V394h1V395h1V393h1h1h1V390h1V393h1h1h1V394h1h1h1h1V395h1V394h1V395h1V394h1h1h1h1V392h1h1h1V393h1h1V392h1V393h1V394h1V393h1V394h1h1V395h1V394h1V393h1h1V391h1V392h1V391h1h1h1V390h1V391h1V389h1V392h1V389h1V394h1V393h1V394h1h1V393h1V390h1V392h1V388h1V391h1V390h1V392h1V387h1V391h1V390h1V391h1h1h1h1V392h1h1V393h1h1V391h1h1h1h1h1V390h1V389h1V390h1h1V389h1V391h1V390h1V391h1V393h1V392h1h1h1h1V391h1V389h1h1h1h1V388h1V387h1V384h1V389h1h1V391h1h1h1V392h1V391h1h1h1V389h1h1h1h1V386h1h1V388h1V387h1V300h1h1V328h1V331h1V320h1V328h1V312h1V331h1V305h1V312h1V304h1V312h1V300h1V305h1V300h1V303h1V309h1V300h1V306h1V310h1V300h1V331h1V300h1h1V305h1V300h1V304h1V300h1h1h1V306h1V300h1V326h1V306h1V304h1V300h1h1V307h1V300h1V310h1V302h1V300h1h1V320h1V305h1V300h1V305h1V300h1V310h1V300h1V302h1V314h1V300h1V312h1V300h1h1V302h1V300h1h1h1h1h1h1h1V303h1V309h1h1V337h1V357h1V376h1V370h1V373h1V371h1V368h1h1V383h1V387h1h1h1V388h1h1h1V387h1V389h1V388h1V387h1V388h1h1V386h1h1V339h1V300h1h1V329h1V332h1V300h1V318h1V317h1V335h1V320h1V326h1V309h1h1V318h1V304h1V324h1V307h1V300h1h1h1h1V324h1V300h1h1V308h1V300h1h1V352h1V300h1V309h1V300h1V313h1V330h1V314h1V335h1V310h1V319h1V306h1V300h1V302h1V323h1V300h1V327h1V300h1V303h1V300h1V314h1V308h1V300h1h1h1V304h1V300h1h1V304h1V300h1h1h1h1h1h1V321h1V300h1V322h1V329h1V300h1V312h1V304h1V309h1V300h1V306h1V300h1V341h1h1V309h1V300h1h1V309h1V302h1V323h1V300h1h1V310h1V300h1V308h1V300h1h1h1V309h1V308h1V300h1V322h1V300h1V320h1V300h1h1V307h1V303h1V308h1V306h1V300h1h1V316h1V300h1h1h1V305h1V300h1h1V308h1V347h1V335h1h1V336h1V332h1V320h1V309h1V308h1V312h1V316h1V314h1V316h1V335h1V354h1V359h1V358h1V362h1V357h1V365h1V362h1V361h1V360h1V363h1V364h1V365h1V369h1h1V370h1V372h1V373h1V377h1V374h1V379h1h1V382h1h1V386h1h1V387h1h1V390h1V391h1V390h1V392h1V391h1V390h1V389h1h1h1V390h1V388h1V389h1V388h1V390h1V388h1V390h1V389h1V390h1V389h1V387h1V388h1V389h1h1V388h1V390h1V389h1h1h1V390h1V387h1V388h1V389h1V388h1V389h1V388h1V389h1V388h1h1V390h1V347h1h1V388h1V387h1V389h1V388h1h1V389h1V388h1V387h1V389h1h1V387h1V389h1V388h1V387h1h1V388h1h1V387h1V389h1h1h1V390h1V389h1h1V388h1V390h1V388h1h1h1h1h1V389h1V388h1V390h1V387h1V388h1V389h1h1V388h1V387h1V388h1h1V389h1h1V388h1V387h1h1V388h1V389h1V370h1V325h1V300h1h1h1V327h1V302h1V327h1V339h1V323h1V321h1V325h1V326h1V328h1V308h1V333h1V309h1V327h1V335h1V331h1V314h1h1V321h1V326h1V320h1V319h1V318h1V332h1h1V307h1V325h1V312h1V318h1h1V316h1h1V311h1V324h1V304h1V303h1V301h1V305h1V300h1h1V302h1V359h1h1V336h1V300h1V317h1V300h1V305h1V300h1V305h1V313h1V309h1V314h1V300h1h1V326h1V335h1V300h1h1h1h1V307h1V313h1V312h1V300h1h1h1h1h1h1h1h1h1h1h1h1V311h1V300h1V311h1V300h1V313h1V300h1h1h1h1V307h1V300h1h1h1h1V329h1V316h1V307h1V300h1h1h1h1h1h1V305h1V300h1h1h1V312h1V300h1h1h1V305h1V300h1h1V303h1V300h1V322h1V300h1h1V314h1V300h1V310h1V326h1V300h1V308h1V350h1V354h1V357h1V353h1V361h1h1V358h1V356h1V357h1V363h1V358h1V363h1V364h1V365h1V381h1V379h1V378h1V376h1V384h1V378h1V382h1V384h1V378h1h1h1V377h1V381h1V378h1V381h1V383h1V375h1V383h1V376h1V381h1V382h1V378h1V379h1V381h1V377h1V375h1h1V378h1V382h1V380h1V377h1h1V378h1V381h1V380h1V377h1V380h1V379h1V378h1V375h1V376h1V378h1V377h1V370h1V371h1V368h1h1V349h1h1V374h1V368h1V366h1V368h1V366h1V372h1V366h1V376h1V364h1V366h1V369h1V371h1V372h1V371h1h1V368h1V371h1V365h1V371h1V363h1V371h1V364h1V368h1V374h1V366h1V369h1V368h1V361h1V370h1V373h1V370h1V363h1V372h1h1V364h1V370h1V362h1V373h1V364h1V366h1V364h1V367h1V362h1V367h1V370h1V364h1h1V372h1V371h1V363h1V369h1V372h1V374h1V363h1V372h1V363h1V367h1V374h1V370h1V375h1V369h1V365h1V375h1V369h1V371h1V375h1V370h1V373h1V368h1V371h1V369h1V365h1V367h1V373h1V377h1V370h1V373h1V371h1V379h1V376h1V371h1V374h1V383h1V381h1V377h1V378h1V376h1V378h1V382h1V380h1V381h1V379h1V381h1h1V373h1V380h1V366h1V362h1V336h1V300h1h1V307h1V312h1V300h1h1V302h1V300h1V398.8V498h-1h-1h-1h-1V496h-1V483h-1V498h-1h-1V474h-1V433h-1V427h-1V422h-1h-1V420h-1V418h-1V413h-1V415h-1V411h-1V415h-1V411h-1V414h-1V413h-1V417h-1V419h-1V417h-1V416h-1V415h-1V421h-1V418h-1h-1V415h-1V420h-1V424h-1V421h-1V419h-1V417h-1V422h-1V420h-1h-1h-1h-1V430h-1V421h-1V420h-1V423h-1V427h-1V425h-1V421h-1V425h-1V424h-1V430h-1h-1V423h-1V429h-1V433h-1V435h-1V430h-1V436h-1V426h-1V430h-1V434h-1V431h-1V430h-1V424h-1V433h-1V429h-1V431h-1V436h-1V426h-1V423h-1V431h-1V435h-1V427h-1V431h-1V426h-1V434h-1V423h-1V425h-1V422h-1V433h-1V423h-1V431h-1V425h-1V424h-1h-1V422h-1V425h-1V430h-1V425h-1V420h-1h-1V424h-1V427h-1h-1V420h-1V430h-1V422h-1h-1h-1V426h-1h-1V423h-1V427h-1V426h-1V425h-1V423h-1V416h-1V478h-1h-1V417h-1V421h-1V417h-1V418h-1V419h-1h-1V422h-1V421h-1V416h-1V418h-1V415h-1V421h-1V414h-1V416h-1V418h-1V417h-1V414h-1V417h-1V416h-1V418h-1V414h-1V411h-1V415h-1V418h-1V415h-1V413h-1V416h-1V412h-1V417h-1V412h-1V418h-1V416h-1h-1V417h-1V414h-1V417h-1V414h-1h-1V412h-1V411h-1V418h-1V416h-1V411h-1h-1V416h-1V411h-1V414h-1V423h-1V425h-1V429h-1V433h-1V436h-1V434h-1h-1V438h-1V436h-1V435h-1V437h-1V439h-1V437h-1V443h-1V454h-1V491h-1V485h-1V462h-1V477h-1V475h-1V489h-1V473h-1V486h-1V446h-1V498h-1V488h-1V498h-1h-1V486h-1V468h-1V498h-1V462h-1V491h-1V498h-1h-1h-1h-1h-1h-1h-1V463h-1V498h-1V446h-1V498h-1h-1V495h-1V484h-1V491h-1V495h-1V496h-1V498h-1h-1h-1h-1h-1h-1h-1V458h-1V440h-1V455h-1V498h-1V453h-1V498h-1h-1h-1h-1V477h-1V498h-1h-1V456h-1V472h-1V495h-1h-1V498h-1V453h-1V474h-1V466h-1V489h-1V498h-1h-1h-1V434h-1h-1V486h-1V498h-1V484h-1V498h-1h-1V477h-1V498h-1V491h-1V498h-1h-1h-1h-1V486h-1V490h-1V498h-1V494h-1V498h-1V455h-1V470h-1V484h-1V475h-1V490h-1V485h-1V474h-1V492h-1V475h-1V487h-1V472h-1V486h-1V469h-1V473h-1V475h-1V476h-1V465h-1V475h-1V479h-1h-1V472h-1V461h-1V472h-1V461h-1V471h-1V464h-1V458h-1V461h-1V465h-1V470h-1V469h-1V460h-1V464h-1V458h-1V498h-1h-1h-1V459h-1V429h-1V410h-1h-1h-1V409h-1V410h-1V409h-1V410h-1V408h-1V410h-1h-1V409h-1V410h-1h-1h-1V409h-1h-1V410h-1V409h-1h-1V410h-1h-1h-1V409h-1V411h-1V409h-1V411h-1V410h-1h-1V409h-1h-1V410h-1h-1h-1h-1V409h-1V410h-1V409h-1V411h-1V409h-1V410h-1h-1V409h-1h-1V408h-1V410h-1V409h-1V408h-1V410h-1V409h-1V457h-1h-1V408h-1V410h-1h-1h-1V409h-1V410h-1h-1h-1V411h-1V409h-1h-1V411h-1V410h-1h-1h-1V409h-1V411h-1V410h-1h-1V411h-1V408h-1V409h-1h-1h-1h-1V410h-1h-1V408h-1V410h-1h-1V409h-1V410h-1V408h-1h-1V407h-1V405h-1h-1V406h-1V407h-1V408h-1V410h-1V411h-1V412h-1V413h-1h-1V416h-1V417h-1V418h-1V419h-1V420h-1V424h-1V425h-1V424h-1V428h-1V426h-1V428h-1h-1V431h-1V428h-1V429h-1V432h-1V435h-1V434h-1V432h-1V439h-1V440h-1V453h-1V456h-1V475h-1V480h-1V486h-1V489h-1V473h-1V469h-1V456h-1V475h-1V484h-1V489h-1V494h-1V468h-1V445h-1V498h-1h-1V473h-1V498h-1h-1h-1V493h-1V498h-1h-1h-1V457h-1V498h-1V462h-1V453h-1V498h-1V490h-1V484h-1V498h-1V490h-1V498h-1V491h-1V489h-1V498h-1h-1h-1h-1V474h-1V485h-1V498h-1h-1V487h-1V498h-1V488h-1V448h-1h-1V498h-1h-1V495h-1V493h-1V472h-1V498h-1h-1h-1V489h-1V488h-1V489h-1V498h-1V470h-1V488h-1V498h-1h-1V460h-1V498h-1V456h-1V498h-1h-1h-1h-1h-1h-1V453h-1V490h-1V457h-1h-1V498h-1V460h-1V456h-1V498h-1V467h-1V453h-1V492h-1V498h-1V491h-1V498h-1h-1V493h-1V461h-1V483h-1V496h-1V498h-1h-1h-1V483h-1V473h-1V459h-1V498h-1V496h-1V492h-1V491h-1h-1V477h-1V490h-1V466h-1V464h-1V475h-1V482h-1V494h-1V476h-1V482h-1V488h-1V479h-1V477h-1V497h-1V461h-1h-1V498h-1h-1V459h-1V410h-1V409h-1V410h-1h-1h-1h-1V409h-1h-1V411h-1V410h-1V411h-1V410h-1V409h-1V412h-1V419h-1V424h-1V430h-1V429h-1V443h-1V447h-1V456h-1V459h-1V473h-1V492h-1V491h-1V482h-1V478h-1V485h-1V498h-1h-1h-1V483h-1V498h-1V486h-1V498h-1h-1h-1V441h-1V486h-1V488h-1V498h-1V494h-1V498h-1h-1V484h-1V498h-1V463h-1V498h-1V489h-1V455h-1V498h-1V451h-1V498h-1V487h-1V498h-1h-1h-1h-1V491h-1V498h-1h-1V457h-1V498h-1V487h-1V495h-1V498h-1V472h-1V498h-1h-1h-1V493h-1V492h-1V455h-1V498h-1h-1h-1V444h-1V484h-1V491h-1V487h-1V496h-1V476h-1V473h-1V461h-1V472h-1V469h-1V495h-1V458h-1V498h-1h-1V410h-1V412h-1V413h-1V411h-1V412h-1V410h-1V413h-1V408h-1V407h-1V408h-1V407h-1V406h-1V407h-1h-1V408h-1h-1V411h-1h-1V409h-1V410h-1V411h-1V409h-1V408h-1h-1h-1V407h-1V406h-1V405h-1V406h-1V407h-1h-1h-1V408h-1V409h-1h-1V408h-1V410h-1V408h-1h-1V406h-1V407h-1V406h-1V405h-1h-1h-1V407h-1V404h-1V406h-1V405h-1V406h-1V407h-1V409h-1V407h-1V409h-1V406h-1h-1V407h-1V406h-1h-1h-1V405h-1V407h-1V404h-1V405h-1h-1h-1V406h-1h-1V405h-1V407h-1V408h-1V406h-1V407h-1V406h-1h-1V405h-1h-1V404h-1V403h-1h-1V404h-1h-1h-1V405h-1V406h-1V405h-1h-1V406h-1V405h-1V406h-1V404h-1V405h-1h-1V403h-1h-1h-1V402h-1V403h-1V404h-1h-1V405h-1V404h-1V406h-1V405h-1h-1V404h-1V405h-1V404h-1V403h-1h-1h-1h-1V402h-1V403h-1h-1h-1V404h-1h-1h-1h-1h-1h-1V403h-1V404h-1V403h-1V402h-1V403h-1V402h-1h-1h-1h-1h-1h-1V403h-1h-1h-1h-1h-1h-1h-1h-1V402h-1V403h-1V402h-1h-1V401h-1h-1h-1V402h-1h-1h-1h-1h-1h-1h-1V403h-1V402h-1h-1h-1h-1V401h-1Z"/></g><g fill="#f0be63" clip-path="url(#cmid)"><path d="M544,197.5V195h1h1h1V194h1h1h1V193h1V191h1V193h1V194h1V195h1V192h1V195h1h1h1h1h1V194h1h1h1h1V193h1h1V194h1V193h1h1h1V194h1h1h1h1h1h1h1V193h1h1V194h1V193h1V192h1V193h1V192h1h1V190h1V193h1h1h1V194h1h1h1h1h1V193h1h1V192h1h1V191h1V192h1V191h1V192h1V191h1V190h1V193h1h1V192h1V194h1h1V193h1V192h1h1h1V191h1V192h1V191h1V190h1V192h1h1V191h1V192h1V189h1V192h1V193h1V192h1V191h1V192h1h1V191h1V192h1V191h1V190h1V191h1V187h1V190h1h1V191h1V192h1V191h1h1V192h1h1h1h1V191h1h1V190h1h1V191h1V190h1h1h1V189h1V191h1V190h1V189h1V191h1h1h1h1V190h1V189h1V191h1V190h1V189h1V188h1V187h1V188h1V189h1h1V188h1V189h1V190h1h1h1V191h1V192h1V191h1V190h1h1V186h1V187h1V186h1V188h1V187h1V186h1V187h1h1V188h1V187h1h1V189h1V187h1V189h1V190h1h1V188h1V186h1V185h1V186h1h1V187h1V184h1V187h1V97h1h1V141h1V117h1V120h1V135h1V154h1V124h1V135h1V111h1V107h1V132h1V97h1h1h1V117h1V113h1V97h1h1V125h1V122h1V113h1V97h1V117h1V97h1h1V109h1V147h1V106h1V102h1V111h1V120h1V99h1V140h1V97h1V103h1V97h1V123h1V97h1V111h1V97h1h1V108h1V97h1V128h1V132h1V127h1V97h1h1V107h1V97h1h1V102h1V103h1h1V111h1V129h1V133h1V106h1V127h1V97h1h1h1V109h1V105h1V106h1V119h1V131h1V152h1V178h1V171h1V168h1V172h1V168h1V172h1V180h1V187h1V184h1V185h1V186h1h1V187h1h1h1V186h1V187h1V185h1V186h1V187h1h1V141h1V97h1h1V139h1V133h1V100h1V132h1V128h1V135h1V108h1V130h1V99h1V102h1V120h1V99h1V114h1V104h1V107h1V97h1h1h1V107h1V137h1V97h1V142h1V100h1V107h1V130h1V104h1V134h1V97h1V118h1V97h1V108h1V140h1V125h1V97h1h1V110h1V118h1V97h1h1V108h1V97h1h1h1V136h1V97h1h1h1h1V107h1V97h1h1V150h1V97h1V100h1V105h1V97h1h1h1V128h1V119h1V132h1V97h1h1h1V133h1V107h1V97h1h1V137h1V108h1V109h1V103h1V134h1V97h1V104h1V97h1V127h1h1V111h1V103h1V107h1V118h1V100h1V114h1V97h1h1V113h1V162h1V111h1V97h1h1V101h1V97h1V102h1V106h1V123h1V130h1V97h1V111h1h1V104h1V133h1V118h1V114h1V109h1V97h1V104h1V112h1V125h1V131h1V132h1V139h1V105h1V104h1V110h1V106h1V119h1V140h1V111h1V127h1V147h1V156h1V160h1V158h1V155h1V154h1V161h1V157h1V162h1h1V161h1V166h1V164h1V168h1V172h1V169h1V173h1h1V176h1V177h1V178h1V179h1V182h1V183h1V185h1V186h1h1V187h1V189h1V190h1h1V189h1h1h1V186h1V188h1V187h1V186h1h1V188h1h1h1h1V187h1V189h1V187h1V188h1h1h1V187h1V188h1V186h1h1h1V187h1V189h1V187h1V189h1V188h1V186h1V187h1h1h1V189h1V187h1h1V140h1h1V187h1h1V188h1V187h1V186h1V187h1h1V188h1V186h1h1h1V185h1V186h1V187h1h1V188h1V187h1h1h1V186h1V188h1h1V187h1V186h1h1V187h1h1h1V186h1h1V188h1V187h1V185h1V186h1h1V185h1V186h1V187h1h1V188h1V186h1h1h1V187h1h1V186h1V187h1h1V186h1V164h1V129h1V97h1h1h1V144h1V137h1V134h1V130h1V136h1V119h1h1V125h1V138h1V98h1V97h1V124h1V98h1h1V97h1V99h1V97h1V98h1V101h1V112h1V124h1V153h1V125h1V121h1V126h1V110h1V131h1V103h1V123h1V103h1V155h1V105h1V113h1V101h1V121h1V103h1V97h1h1V102h1V97h1h1h1h1h1h1h1V133h1V97h1V109h1V97h1V99h1V107h1V97h1V121h1V97h1h1V111h1V97h1V162h1V97h1V111h1V97h1h1V153h1V97h1h1V106h1V97h1V105h1V110h1V111h1V97h1h1h1h1V110h1V97h1h1h1V165h1V117h1V106h1V97h1V157h1V108h1V97h1h1V142h1V109h1V97h1h1h1h1V101h1V108h1V97h1V118h1V97h1V121h1V111h1V97h1V118h1V97h1V126h1V97h1h1V100h1V97h1V132h1V97h1h1h1h1V139h1V97h1V101h1V108h1V129h1V124h1V126h1V149h1V155h1V154h1V153h1V154h1V160h1V159h1V156h1V159h1h1V157h1V161h1h1V162h1V178h1h1V175h1V177h1V175h1V180h1h1V175h1V176h1h1V177h1V182h1V174h1V178h1V176h1V181h1V173h1V176h1h1V179h1V176h1V174h1V180h1V178h1V173h1V179h1V178h1V176h1V174h1V176h1V174h1V178h1V176h1V172h1V175h1V169h1V178h1V176h1V174h1V175h1V178h1V177h1V174h1V170h1V173h1V170h1V177h1V144h1h1V170h1V163h1V172h1V171h1V175h1V171h1V163h1V167h1V166h1V170h1V172h1V164h1V173h1V165h1V164h1V171h1h1V166h1V169h1V170h1V169h1V171h1V163h1V168h1V166h1V173h1V170h1V165h1V169h1V161h1V160h1V161h1V171h1V167h1V164h1V169h1V164h1V167h1V168h1V171h1V164h1V170h1V163h1V168h1V160h1V161h1h1V160h1V161h1V168h1V173h1V165h1V160h1V171h1V170h1V168h1V173h1V163h1V170h1V168h1V161h1V174h1V166h1V173h1V164h1V173h1V174h1V172h1V173h1V167h1V163h1V170h1V169h1V174h1V167h1h1V173h1V178h1V177h1V171h1h1V176h1V173h1V178h1h1V182h1V177h1V179h1V178h1V180h1V178h1h1h1V175h1V174h1V177h1V172h1V164h1V123h1V97h1h1h1h1h1h1h1h1V197.5V298h-1h-1h-1h-1h-1h-1h-1h-1V278h-1V224h-1V223h-1h-1V216h-1V215h-1V214h-1V216h-1V208h-1V211h-1V210h-1V211h-1h-1V215h-1V211h-1V216h-1V212h-1V214h-1V215h-1V216h-1V215h-1V218h-1V219h-1V218h-1h-1V222h-1V220h-1V216h-1V220h-1V224h-1V226h-1V225h-1V220h-1V226h-1V225h-1V220h-1V227h-1V225h-1V222h-1V229h-1V226h-1V231h-1V230h-1V225h-1V220h-1V233h-1V225h-1h-1V230h-1h-1V231h-1h-1V228h-1V224h-1V225h-1V233h-1V234h-1V227h-1V228h-1V227h-1V228h-1V223h-1V224h-1V223h-1V233h-1V223h-1V222h-1V221h-1V229h-1V221h-1V222h-1V227h-1h-1V232h-1V224h-1V228h-1V232h-1V223h-1V230h-1V225h-1V230h-1V231h-1V229h-1V224h-1V219h-1V226h-1h-1V222h-1V224h-1V223h-1V220h-1V219h-1V221h-1V223h-1V226h-1h-1h-1V224h-1V220h-1V278h-1h-1V218h-1V221h-1V219h-1V220h-1V222h-1V221h-1V215h-1h-1h-1V218h-1V212h-1V216h-1V212h-1h-1h-1V217h-1V213h-1V215h-1V211h-1V217h-1V213h-1V216h-1V212h-1V215h-1h-1V211h-1V212h-1V213h-1V215h-1V211h-1V214h-1h-1V212h-1h-1h-1V216h-1V215h-1h-1V213h-1V211h-1V212h-1V215h-1V212h-1h-1V214h-1V215h-1V214h-1V221h-1V225h-1V230h-1V232h-1V231h-1V232h-1V233h-1V240h-1V234h-1V235h-1V240h-1h-1V241h-1V243h-1V289h-1V249h-1V256h-1V261h-1V267h-1V285h-1V284h-1V293h-1V298h-1h-1V290h-1V268h-1V298h-1V266h-1V272h-1V276h-1V298h-1V284h-1V298h-1h-1h-1h-1h-1V287h-1V298h-1h-1h-1V250h-1V298h-1h-1h-1V284h-1V298h-1h-1V276h-1V282h-1V298h-1h-1V258h-1V298h-1V285h-1V298h-1h-1h-1h-1V276h-1V257h-1V298h-1h-1h-1h-1V285h-1V298h-1h-1h-1V265h-1V282h-1V217h-1h-1V279h-1V264h-1V277h-1V289h-1V298h-1V254h-1V298h-1h-1V271h-1V268h-1V281h-1V298h-1h-1V296h-1V294h-1V285h-1V283h-1V298h-1h-1V258h-1V291h-1V298h-1V292h-1V298h-1h-1h-1V276h-1V293h-1V278h-1V289h-1V275h-1V292h-1V290h-1V270h-1V288h-1V274h-1V286h-1V290h-1V289h-1V290h-1V280h-1V269h-1V275h-1V270h-1V265h-1V272h-1V274h-1V268h-1V282h-1V278h-1V274h-1V280h-1V279h-1V270h-1V293h-1V277h-1V271h-1V267h-1V254h-1V256h-1h-1V298h-1h-1h-1V259h-1V225h-1V207h-1V209h-1h-1h-1h-1h-1h-1h-1V208h-1h-1h-1V207h-1V210h-1V209h-1V208h-1h-1V209h-1V208h-1V210h-1V207h-1V210h-1V209h-1h-1V208h-1h-1h-1h-1h-1V210h-1h-1V207h-1V210h-1V209h-1V208h-1V209h-1V207h-1V208h-1V207h-1V209h-1V208h-1V209h-1h-1h-1h-1V208h-1h-1h-1V209h-1V208h-1V251h-1h-1V208h-1h-1V209h-1V208h-1h-1V209h-1h-1h-1V208h-1V210h-1V208h-1V209h-1V208h-1V209h-1V207h-1V208h-1V207h-1h-1V208h-1V209h-1h-1h-1h-1h-1V207h-1V209h-1V208h-1V209h-1h-1V208h-1h-1V209h-1V208h-1V207h-1V206h-1V203h-1V204h-1V205h-1V206h-1V207h-1V210h-1h-1V211h-1V212h-1h-1V214h-1h-1V215h-1V218h-1V217h-1V222h-1V225h-1V226h-1h-1V224h-1V229h-1V231h-1V230h-1V228h-1V233h-1V228h-1V234h-1V230h-1V236h-1V235h-1V240h-1V250h-1V260h-1V266h-1V279h-1V283h-1V275h-1V267h-1V263h-1V255h-1V275h-1V284h-1V298h-1V251h-1V258h-1V295h-1V298h-1V260h-1V298h-1V263h-1V262h-1V288h-1V242h-1V298h-1h-1h-1h-1h-1V266h-1V291h-1V296h-1V239h-1V298h-1h-1h-1V240h-1V284h-1V289h-1V298h-1V274h-1V275h-1V288h-1V267h-1V294h-1V298h-1h-1h-1h-1V222h-1h-1V298h-1V295h-1V298h-1h-1V286h-1V298h-1V276h-1V291h-1V298h-1V242h-1V298h-1h-1V260h-1V298h-1V292h-1V284h-1V298h-1h-1V295h-1V277h-1V298h-1V273h-1V298h-1h-1h-1V260h-1V271h-1V298h-1h-1h-1V253h-1V282h-1V293h-1V271h-1V294h-1V298h-1V249h-1V298h-1h-1h-1V289h-1V298h-1V291h-1V298h-1h-1V280h-1V298h-1h-1V269h-1V287h-1V277h-1V251h-1V294h-1V291h-1h-1h-1V286h-1V298h-1V270h-1V281h-1V278h-1V265h-1V261h-1V265h-1V277h-1V266h-1V274h-1V259h-1V276h-1V253h-1V254h-1V298h-1h-1V255h-1V208h-1h-1V210h-1V209h-1V208h-1V209h-1h-1V208h-1V210h-1V208h-1h-1h-1h-1V211h-1V219h-1V225h-1V228h-1V230h-1V238h-1V250h-1V255h-1V271h-1V269h-1V286h-1V290h-1V295h-1V287h-1V298h-1h-1h-1h-1h-1h-1h-1h-1h-1h-1h-1V288h-1V298h-1V282h-1V298h-1V273h-1V298h-1h-1V293h-1h-1V298h-1h-1V255h-1V294h-1V287h-1V284h-1h-1V298h-1h-1h-1h-1h-1h-1V272h-1V298h-1V285h-1V298h-1V240h-1V298h-1V283h-1V273h-1V298h-1h-1V294h-1V298h-1h-1h-1h-1h-1h-1V281h-1V289h-1V285h-1V275h-1V267h-1V270h-1V264h-1V293h-1V271h-1V262h-1V296h-1V298h-1h-1V210h-1V211h-1h-1V210h-1V209h-1V210h-1V208h-1h-1V207h-1h-1V205h-1V206h-1V205h-1V207h-1h-1h-1V209h-1V211h-1V209h-1h-1V208h-1V209h-1V208h-1V207h-1V208h-1V206h-1V205h-1h-1V206h-1h-1V205h-1V206h-1h-1h-1V208h-1V210h-1V209h-1V208h-1h-1V207h-1V206h-1V205h-1V208h-1V203h-1V204h-1h-1h-1V206h-1V205h-1h-1V206h-1V205h-1h-1V207h-1V206h-1h-1V205h-1h-1V204h-1V205h-1V203h-1V204h-1V203h-1V204h-1h-1h-1V205h-1V204h-1h-1V205h-1h-1h-1V204h-1h-1V203h-1h-1h-1h-1h-1h-1h-1h-1V204h-1h-1V203h-1V205h-1h-1V204h-1V205h-1h-1V203h-1V204h-1V203h-1V202h-1h-1h-1h-1h-1h-1h-1V203h-1V204h-1V203h-1V204h-1V203h-1h-1h-1h-1V202h-1V203h-1V202h-1h-1V201h-1h-1V202h-1V201h-1V203h-1V202h-1h-1V203h-1V202h-1V203h-1V202h-1h-1V203h-1V202h-1h-1V201h-1V203h-1V200h-1V203h-1V201h-1h-1h-1V202h-1V204h-1V202h-1V201h-1h-1V203h-1V202h-1V201h-1h-1h-1h-1V200h-1h-1h-1h-1h-1V201h-1h-1h-1h-1h-1h-1h-1h-1V200h-1V202h-1V200h-1Z"/><path d="M544,398.8V396h1h1V393h1h1V395h1V394h1V395h1h1h1V396h1h1h1h1h1h1h1h1V395h1h1h1h1V393h1V395h1V394h1V395h1V394h1V395h1h1V396h1h1V395h1V396h1V393h1V395h1h1h1h1V394h1V393h1V395h1V393h1V394h1h1h1h1h1V393h1V396h1V395h1h1V392h1V394h1V395h1V393h1h1h1V390h1V393h1h1h1V394h1h1h1h1V395h1V394h1V395h1V394h1h1h1h1V392h1h1h1V393h1h1V392h1V393h1V394h1V393h1V394h1h1V395h1V394h1V393h1h1V391h1V392h1V391h1h1h1V390h1V391h1V389h1V392h1V389h1V394h1V393h1V394h1h1V393h1V390h1V392h1V388h1V391h1V390h1V392h1V387h1V391h1V390h1V391h1h1h1h1V392h1h1V393h1h1V391h1h1h1h1h1V390h1V389h1V390h1h1V389h1V391h1V390h1V391h1V393h1V392h1h1h1h1V391h1V389h1h1h1h1V388h1V387h1V384h1V389h1h1V391h1h1h1V392h1V391h1h1h1V389h1h1h1h1V386h1h1V388h1V387h1V300h1h1V328h1V331h1V320h1V328h1V312h1V331h1V305h1V312h1V304h1V312h1V300h1V305h1V300h1V303h1V309h1V300h1V306h1V310h1V300h1V331h1V300h1h1V305h1V300h1V304h1V300h1h1h1V306h1V300h1V326h1V306h1V304h1V300h1h1V307h1V300h1V310h1V302h1V300h1h1V320h1V305h1V300h1V305h1V300h1V310h1V300h1V302h1V314h1V300h1V312h1V300h1h1V302h1V300h1h1h1h1h1h1h1V303h1V309h1h1V337h1V357h1V376h1V370h1V373h1V371h1V368h1h1V383h1V387h1h1h1V388h1h1h1V387h1V389h1V388h1V387h1V388h1h1V386h1h1V339h1V300h1h1V329h1V332h1V300h1V318h1V317h1V335h1V320h1V326h1V309h1h1V318h1V304h1V324h1V307h1V300h1h1h1h1V324h1V300h1h1V308h1V300h1h1V352h1V300h1V309h1V300h1V313h1V330h1V314h1V335h1V310h1V319h1V306h1V300h1V302h1V323h1V300h1V327h1V300h1V303h1V300h1V314h1V308h1V300h1h1h1V304h1V300h1h1V304h1V300h1h1h1h1h1h1V321h1V300h1V322h1V329h1V300h1V312h1V304h1V309h1V300h1V306h1V300h1V341h1h1V309h1V300h1h1V309h1V302h1V323h1V300h1h1V310h1V300h1V308h1V300h1h1h1V309h1V308h1V300h1V322h1V300h1V320h1V300h1h1V307h1V303h1V308h1V306h1V300h1h1V316h1V300h1h1h1V305h1V300h1h1V308h1V347h1V335h1h1V336h1V332h1V320h1V309h1V308h1V312h1V316h1V314h1V316h1V335h1V354h1V359h1V358h1V362h1V357h1V365h1V362h1V361h1V360h1V363h1V364h1V365h1V369h1h1V370h1V372h1V373h1V377h1V374h1V379h1h1V382h1h1V386h1h1V387h1h1V390h1V391h1V390h1V392h1V391h1V390h1V389h1h1h1V390h1V388h1V389h1V388h1V390h1V388h1V390h1V389h1V390h1V389h1V387h1V388h1V389h1h1V388h1V390h1V389h1h1h1V390h1V387h1V388h1V389h1V388h1V389h1V388h1V389h1V388h1h1V390h1V347h1h1V388h1V387h1V389h1V388h1h1V389h1V388h1V387h1V389h1h1V387h1V389h1V388h1V387h1h1V388h1h1V387h1V389h1h1h1V390h1V389h1h1V388h1V390h1V388h1h1h1h1h1V389h1V388h1V390h1V387h1V388h1V389h1h1V388h1V387h1V388h1h1V389h1h1V388h1V387h1h1V388h1V389h1V370h1V325h1V300h1h1h1V327h1V302h1V327h1V339h1V323h1V321h1V325h1V326h1V328h1V308h1V333h1V309h1V327h1V335h1V331h1V314h1h1V321h1V326h1V320h1V319h1V318h1V332h1h1V307h1V325h1V312h1V318h1h1V316h1h1V311h1V324h1V304h1V303h1V301h1V305h1V300h1h1V302h1V359h1h1V336h1V300h1V317h1V300h1V305h1V300h1V305h1V313h1V309h1V314h1V300h1h1V326h1V335h1V300h1h1h1h1V307h1V313h1V312h1V300h1h1h1h1h1h1h1h1h1h1h1h1V311h1V300h1V311h1V300h1V313h1V300h1h1h1h1V307h1V300h1h1h1h1V329h1V316h1V307h1V300h1h1h1h1h1h1V305h1V300h1h1h1V312h1V300h1h1h1V305h1V300h1h1V303h1V300h1V322h1V300h1h1V314h1V300h1V310h1V326h1V300h1V308h1V350h1V354h1V357h1V353h1V361h1h1V358h1V356h1V357h1V363h1V358h1V363h1V364h1V365h1V381h1V379h1V378h1V376h1V384h1V378h1V382h1V384h1V378h1h1h1V377h1V381h1V378h1V381h1V383h1V375h1V383h1V376h1V381h1V382h1V378h1V379h1V381h1V377h1V375h1h1V378h1V382h1V380h1V377h1h1V378h1V381h1V380h1V377h1V380h1V379h1V378h1V375h1V376h1V378h1V377h1V370h1V371h1V368h1h1V349h1h1V374h1V368h1V366h1V368h1V366h1V372h1V366h1V376h1V364h1V366h1V369h1V371h1V372h1V371h1h1V368h1V371h1V365h1V371h1V363h1V371h1V364h1V368h1V374h1V366h1V369h1V368h1V361h1V370h1V373h1V370h1V363h1V372h1h1V364h1V370h1V362h1V373h1V364h1V366h1V364h1V367h1V362h1V367h1V370h1V364h1h1V372h1V371h1V363h1V369h1V372h1V374h1V363h1V372h1V363h1V367h1V374h1V370h1V375h1V369h1V365h1V375h1V369h1V371h1V375h1V370h1V373h1V368h1V371h1V369h1V365h1V367h1V373h1V377h1V370h1V373h1V371h1V379h1V376h1V371h1V374h1V383h1V381h1V377h1V378h1V376h1V378h1V382h1V380h1V381h1V379h1V381h1h1V373h1V380h1V366h1V362h1V336h1V300h1h1V307h1V312h1V300h1h1V302h1V300h1V398.8V498h-1h-1h-1h-1V496h-1V483h-1V498h-1h-1V474h-1V433h-1V427h-1V422h-1h-1V420h-1V418h-1V413h-1V415h-1V411h-1V415h-1V411h-1V414h-1V413h-1V417h-1V419h-1V417h-1V416h-1V415h-1V421h-1V418h-1h-1V415h-1V420h-1V424h-1V421h-1V419h-1V417h-1V422h-1V420h-1h-1h-1h-1V430h-1V421h-1V420h-1V423h-1V427h-1V425h-1V421h-1V425h-1V424h-1V430h-1h-1V423h-1V429h-1V433h-1V435h-1V430h-1V436h-1V426h-1V430h-1V434h-1V431h-1V430h-1V424h-1V433h-1V429h-1V431h-1V436h-1V426h-1V423h-1V431h-1V435h-1V427h-1V431h-1V426h-1V434h-1V423h-1V425h-1V422h-1V433h-1V423h-1V431h-1V425h-1V424h-1h-1V422h-1V425h-1V430h-1V425h-1V420h-1h-1V424h-1V427h-1h-1V420h-1V430h-1V422h-1h-1h-1V426h-1h-1V423h-1V427h-1V426h-1V425h-1V423h-1V416h-1V478h-1h-1V417h-1V421h-1V417h-1V418h-1V419h-1h-1V422h-1V421h-1V416h-1V418h-1V415h-1V421h-1V414h-1V416h-1V418h-1V417h-1V414h-1V417h-1V416h-1V418h-1V414h-1V411h-1V415h-1V418h-1V415h-1V413h-1V416h-1V412h-1V417h-1V412h-1V418h-1V416h-1h-1V417h-1V414h-1V417h-1V414h-1h-1V412h-1V411h-1V418h-1V416h-1V411h-1h-1V416h-1V411h-1V414h-1V423h-1V425h-1V429h-1V433h-1V436h-1V434h-1h-1V438h-1V436h-1V435h-1V437h-1V439h-1V437h-1V443h-1V454h-1V491h-1V485h-1V462h-1V477h-1V475h-1V489h-1V473h-1V486h-1V446h-1V498h-1V488h-1V498h-1h-1V486h-1V468h-1V498h-1V462h-1V491h-1V498h-1h-1h-1h-1h-1h-1h-1V463h-1V498h-1V446h-1V498h-1h-1V495h-1V484h-1V491h-1V495h-1V496h-1V498h-1h-1h-1h-1h-1h-1h-1V458h-1V440h-1V455h-1V498h-1V453h-1V498h-1h-1h-1h-1V477h-1V498h-1h-1V456h-1V472h-1V495h-1h-1V498h-1V453h-1V474h-1V466h-1V489h-1V498h-1h-1h-1V434h-1h-1V486h-1V498h-1V484h-1V498h-1h-1V477h-1V498h-1V491h-1V498h-1h-1h-1h-1V486h-1V490h-1V498h-1V494h-1V498h-1V455h-1V470h-1V484h-1V475h-1V490h-1V485h-1V474h-1V492h-1V475h-1V487h-1V472h-1V486h-1V469h-1V473h-1V475h-1V476h-1V465h-1V475h-1V479h-1h-1V472h-1V461h-1V472h-1V461h-1V471h-1V464h-1V458h-1V461h-1V465h-1V470h-1V469h-1V460h-1V464h-1V458h-1V498h-1h-1h-1V459h-1V429h-1V410h-1h-1h-1V409h-1V410h-1V409h-1V410h-1V408h-1V410h-1h-1V409h-1V410h-1h-1h-1V409h-1h-1V410h-1V409h-1h-1V410h-1h-1h-1V409h-1V411h-1V409h-1V411h-1V410h-1h-1V409h-1h-1V410h-1h-1h-1h-1V409h-1V410h-1V409h-1V411h-1V409h-1V410h-1h-1V409h-1h-1V408h-1V410h-1V409h-1V408h-1V410h-1V409h-1V457h-1h-1V408h-1V410h-1h-1h-1V409h-1V410h-1h-1h-1V411h-1V409h-1h-1V411h-1V410h-1h-1h-1V409h-1V411h-1V410h-1h-1V411h-1V408h-1V409h-1h-1h-1h-1V410h-1h-1V408h-1V410h-1h-1V409h-1V410h-1V408h-1h-1V407h-1V405h-1h-1V406h-1V407h-1V408h-1V410h-1V411h-1V412h-1V413h-1h-1V416h-1V417h-1V418h-1V419h-1V420h-1V424h-1V425h-1V424h-1V428h-1V426h-1V428h-1h-1V431h-1V428h-1V429h-1V432h-1V435h-1V434h-1V432h-1V439h-1V440h-1V453h-1V456h-1V475h-1V480h-1V486h-1V489h-1V473h-1V469h-1V456h-1V475h-1V484h-1V489h-1V494h-1V468h-1V445h-1V498h-1h-1V473h-1V498h-1h-1h-1V493h-1V498h-1h-1h-1V457h-1V498h-1V462h-1V453h-1V498h-1V490h-1V484h-1V498h-1V490h-1V498h-1V491h-1V489h-1V498h-1h-1h-1h-1V474h-1V485h-1V498h-1h-1V487h-1V498h-1V488h-1V448h-1h-1V498h-1h-1V495h-1V493h-1V472h-1V498h-1h-1h-1V489h-1V488h-1V489h-1V498h-1V470h-1V488h-1V498h-1h-1V460h-1V498h-1V456h-1V498h-1h-1h-1h-1h-1h-1V453h-1V490h-1V457h-1h-1V498h-1V460h-1V456h-1V498h-1V467h-1V453h-1V492h-1V498h-1V491h-1V498h-1h-1V493h-1V461h-1V483h-1V496h-1V498h-1h-1h-1V483h-1V473h-1V459h-1V498h-1V496h-1V492h-1V491h-1h-1V477h-1V490h-1V466h-1V464h-1V475h-1V482h-1V494h-1V476h-1V482h-1V488h-1V479h-1V477h-1V497h-1V461h-1h-1V498h-1h-1V459h-1V410h-1V409h-1V410h-1h-1h-1h-1V409h-1h-1V411h-1V410h-1V411h-1V410h-1V409h-1V412h-1V419h-1V424h-1V430h-1V429h-1V443h-1V447h-1V456h-1V459h-1V473h-1V492h-1V491h-1V482h-1V478h-1V485h-1V498h-1h-1h-1V483h-1V498h-1V486h-1V498h-1h-1h-1V441h-1V486h-1V488h-1V498h-1V494h-1V498h-1h-1V484h-1V498h-1V463h-1V498h-1V489h-1V455h-1V498h-1V451h-1V498h-1V487h-1V498h-1h-1h-1h-1V491h-1V498h-1h-1V457h-1V498h-1V487h-1V495h-1V498h-1V472h-1V498h-1h-1h-1V493h-1V492h-1V455h-1V498h-1h-1h-1V444h-1V484h-1V491h-1V487h-1V496h-1V476h-1V473h-1V461h-1V472h-1V469h-1V495h-1V458h-1V498h-1h-1V410h-1V412h-1V413h-1V411h-1V412h-1V410h-1V413h-1V408h-1V407h-1V408h-1V407h-1V406h-1V407h-1h-1V408h-1h-1V411h-1h-1V409h-1V410h-1V411h-1V409h-1V408h-1h-1h-1V407h-1V406h-1V405h-1V406h-1V407h-1h-1h-1V408h-1V409h-1h-1V408h-1V410h-1V408h-1h-1V406h-1V407h-1V406h-1V405h-1h-1h-1V407h-1V404h-1V406h-1V405h-1V406h-1V407h-1V409h-1V407h-1V409h-1V406h-1h-1V407h-1V406h-1h-1h-1V405h-1V407h-1V404h-1V405h-1h-1h-1V406h-1h-1V405h-1V407h-1V408h-1V406h-1V407h-1V406h-1h-1V405h-1h-1V404h-1V403h-1h-1V404h-1h-1h-1V405h-1V406h-1V405h-1h-1V406h-1V405h-1V406h-1V404h-1V405h-1h-1V403h-1h-1h-1V402h-1V403h-1V404h-1h-1V405h-1V404h-1V406h-1V405h-1h-1V404h-1V405h-1V404h-1V403h-1h-1h-1h-1V402h-1V403h-1h-1h-1V404h-1h-1h-1h-1h-1h-1V403h-1V404h-1V403h-1V402h-1V403h-1V402h-1h-1h-1h-1h-1h-1V403h-1h-1h-1h-1h-1h-1h-1h-1V402h-1V403h-1V402h-1h-1V401h-1h-1h-1V402h-1h-1h-1h-1h-1h-1h-1V403h-1V402h-1h-1h-1h-1V401h-1Z"/></g>
</svg>
<div style="left:544px;top:96.8px;width:786px;height:1.7px;background:#d8a900;"></div>
<div style="left:544px;top:298px;width:786px;height:2px;background:#050505;"></div>
<div style="left:543.9px;top:97.5px;width:1.4px;height:462px;background:#e81010;"></div>
<svg style="left:543px;top:82px" width="14" height="17" viewBox="543 82 14 17">
<defs><linearGradient id="phg" x1="0" y1="0" x2="1" y2="0"><stop offset="0" stop-color="#ffffff"/><stop offset="1" stop-color="#bdbdbd"/></linearGradient></defs>
<polygon points="544,83.7 550.4,83.7 550.4,88 544,97" fill="url(#phg)"/>
<polygon points="544,97.4 550.2,88 555,88 555,97.4" fill="#7b6338"/>
<path d="M544.2,97.2 L550.4,88.2 H555" fill="none" stroke="#e9ba62" stroke-width="1"/>
</svg>
<span class="t" style="left:1337.00px;top:101.69px;font-size:11px;color:#c4c4c4;letter-spacing:-0.875px;">dB</span>
<div style="left:1331.5px;top:128.5px;width:4.5px;height:1px;background:#8a8a8a;"></div>
<span class="t" style="left:1342.00px;top:123.59px;font-size:11px;color:#c4c4c4;letter-spacing:-0.900px;">-3</span>
<div style="left:1331.5px;top:326.5px;width:4.5px;height:1px;background:#8a8a8a;"></div>
<span class="t" style="left:1342.00px;top:321.59px;font-size:11px;color:#c4c4c4;letter-spacing:-0.900px;">-3</span>
<div style="left:1331.5px;top:148.8px;width:4.5px;height:1px;background:#8a8a8a;"></div>
<span class="t" style="left:1342.00px;top:143.89px;font-size:11px;color:#c4c4c4;letter-spacing:-0.900px;">-6</span>
<div style="left:1331.5px;top:346.8px;width:4.5px;height:1px;background:#8a8a8a;"></div>
<span class="t" style="left:1342.00px;top:341.89px;font-size:11px;color:#c4c4c4;letter-spacing:-0.900px;">-6</span>
<div style="left:1331.5px;top:174.8px;width:4.5px;height:1px;background:#8a8a8a;"></div>
<span class="t" style="left:1339.00px;top:169.89px;font-size:11px;color:#c4c4c4;letter-spacing:-0.298px;">-12</span>
<div style="left:1331.5px;top:372.8px;width:4.5px;height:1px;background:#8a8a8a;"></div>
<span class="t" style="left:1339.00px;top:367.89px;font-size:11px;color:#c4c4c4;letter-spacing:-0.298px;">-12</span>
<div style="left:1331.5px;top:186.3px;width:4.5px;height:1px;background:#8a8a8a;"></div>
<span class="t" style="left:1339.00px;top:181.39px;font-size:11px;color:#c4c4c4;letter-spacing:-0.298px;">-18</span>
<div style="left:1331.5px;top:384.3px;width:4.5px;height:1px;background:#8a8a8a;"></div>
<span class="t" style="left:1339.00px;top:379.39px;font-size:11px;color:#c4c4c4;letter-spacing:-0.298px;">-18</span>
<div style="left:1331.5px;top:210.3px;width:4.5px;height:1px;background:#8a8a8a;"></div>
<span class="t" style="left:1339.00px;top:205.39px;font-size:11px;color:#c4c4c4;letter-spacing:-0.298px;">-18</span>
<div style="left:1331.5px;top:408.3px;width:4.5px;height:1px;background:#8a8a8a;"></div>
<span class="t" style="left:1339.00px;top:403.39px;font-size:11px;color:#c4c4c4;letter-spacing:-0.298px;">-18</span>
<div style="left:1331.5px;top:222.5px;width:4.5px;height:1px;background:#8a8a8a;"></div>
<span class="t" style="left:1339.00px;top:217.59px;font-size:11px;color:#c4c4c4;letter-spacing:-0.298px;">-12</span>
<div style="left:1331.5px;top:420.5px;width:4.5px;height:1px;background:#8a8a8a;"></div>
<span class="t" style="left:1339.00px;top:415.59px;font-size:11px;color:#c4c4c4;letter-spacing:-0.298px;">-12</span>
<div style="left:1331.5px;top:247.2px;width:4.5px;height:1px;background:#8a8a8a;"></div>
<span class="t" style="left:1342.00px;top:242.29px;font-size:11px;color:#c4c4c4;letter-spacing:-0.900px;">-6</span>
<div style="left:1331.5px;top:445.2px;width:4.5px;height:1px;background:#8a8a8a;"></div>
<span class="t" style="left:1342.00px;top:440.29px;font-size:11px;color:#c4c4c4;letter-spacing:-0.900px;">-6</span>
<div style="left:1331.5px;top:268.5px;width:4.5px;height:1px;background:#8a8a8a;"></div>
<span class="t" style="left:1342.00px;top:263.59px;font-size:11px;color:#c4c4c4;letter-spacing:-0.900px;">-3</span>
<div style="left:1331.5px;top:466.5px;width:4.5px;height:1px;background:#8a8a8a;"></div>
<span class="t" style="left:1342.00px;top:461.59px;font-size:11px;color:#c4c4c4;letter-spacing:-0.900px;">-3</span>
<div style="left:1331.5px;top:198.5px;width:4.5px;height:1px;background:#8a8a8a;"></div>
<span class="t" style="left:1339.00px;top:193.29px;font-size:11px;color:#c4c4c4;letter-spacing:0.205px;">-∞</span>
<div style="left:1331.5px;top:396.5px;width:4.5px;height:1px;background:#8a8a8a;"></div>
<span class="t" style="left:1339.00px;top:391.29px;font-size:11px;color:#c4c4c4;letter-spacing:0.205px;">-∞</span>
<div style="left:544px;top:497.8px;width:786px;height:62.2px;background:#3f444d;background-image:linear-gradient(to right,#373c45 1px,transparent 1px),linear-gradient(to bottom,#373c45 1px,transparent 1px);background-size:15px 15px,15px 15px;background-position:-0.5px 0px,0px -0.2px;"></div>
<div style="left:545px;top:541.8px;width:780.5px;height:1.6px;background:#a9d1ef;"></div>
<div style="left:1331px;top:499px;width:21.5px;height:1px;background:#9a9a9a;"></div>
<div style="left:1331px;top:558px;width:21.5px;height:1px;background:#9a9a9a;"></div>
<span class="t" style="left:1332.50px;top:500.69px;font-size:11px;color:#c4c4c4;letter-spacing:-0.322px;">+12</span>
<span class="t" style="left:1332.50px;top:537.29px;font-size:11px;color:#c4c4c4;letter-spacing:-0.540px;">+0</span>
<span class="t" style="left:1331.50px;top:545.49px;font-size:11px;color:#c4c4c4;letter-spacing:0.213px;">- ∞</span>
<div style="left:544px;top:567px;width:770px;height:8px;background:#2c2c2c;"></div>
<svg style="left:1318px;top:566px" width="10" height="10" viewBox="0 0 10 10"><polygon points="0.8,0.8 9,5 0.8,9.2" fill="#cdcdcd"/></svg>
<div style="left:544px;top:582px;width:812px;height:54.5px;background:#2e2e2e;border-top:1px solid #4a4844;border-bottom:1px solid #4a4844;box-sizing:border-box;"></div>
<svg style="left:780px;top:596px" width="46" height="24" viewBox="0 0 46 24">
<g fill="none" stroke="#636363" stroke-width="1.3">
<circle cx="0.2" cy="10.8" r="4.6"/><path d="M3.2,14.6 L7.6,19.6" stroke-width="1.7"/>
<path d="M31,4.4 H38.6 V8 M24.6,4.4 H28 M24.6,4.4 V15 H30"/>
<rect x="28.2" y="2.9" width="6.8" height="2.8" fill="#636363" stroke="none"/>
<circle cx="35" cy="12.4" r="4.9"/><path d="M38.4,16.2 L42.6,20.4" stroke-width="1.7"/>
</g></svg>
<span class="t" style="left:1057.50px;top:602.84px;font-size:12px;color:#cfcfcf;letter-spacing:-0.173px;">Time</span>
<div style="left:1107.3px;top:599.2px;width:94.6px;height:19.4px;background:#212121;border:1px solid #47443f;box-sizing:border-box;border-radius:3.5px;"></div>
<span class="t" style="left:1112.00px;top:602.90px;font-size:13px;color:#f0f0f0;letter-spacing:0.270px;">00</span>
<span class="t" style="left:1136.10px;top:602.90px;font-size:13px;color:#f0f0f0;letter-spacing:0.270px;">00</span>
<span class="t" style="left:1160.00px;top:602.90px;font-size:13px;color:#f0f0f0;letter-spacing:0.270px;">00</span>
<span class="t" style="left:1183.70px;top:602.90px;font-size:13px;color:#f0f0f0;letter-spacing:0.270px;">00</span>
<span class="t" style="left:1128.58px;top:602.60px;font-size:13px;color:#f0f0f0;">:</span>
<span class="t" style="left:1152.68px;top:602.60px;font-size:13px;color:#f0f0f0;">:</span>
<span class="t" style="left:1176.48px;top:602.60px;font-size:13px;color:#f0f0f0;">:</span>
<span class="t" style="left:1211.50px;top:602.84px;font-size:12px;color:#c8c8c8;letter-spacing:-0.494px;">Total: 00:00:46:16</span>
<div style="left:544px;top:637px;width:811px;height:48px;background:#1c1c1c;"></div>
<span class="t" style="left:781.60px;top:641.84px;font-size:12px;color:#c6c6c6;">6</span>
<span class="t" style="left:1079.00px;top:641.84px;font-size:12px;color:#c6c6c6;letter-spacing:-0.422px;">Selected start: 00:00:00:00</span>
<span class="t" style="left:1221.00px;top:641.84px;font-size:12px;color:#c6c6c6;letter-spacing:-0.442px;">Selected end: 00:00:00:00</span>
<span class="t" style="left:1079.00px;top:656.84px;font-size:12px;color:#c6c6c6;letter-spacing:-0.332px;">Duration: 00:00:00:00</span>
<div style="left:1104px;top:691px;width:119.5px;height:22px;background:#363636;border-radius:2px;"></div>
<div style="left:1232.8px;top:691px;width:119.8px;height:22px;background:#363636;border-radius:2px;"></div>
<span class="t" style="left:1156.00px;top:695.84px;font-size:12px;color:#d6d6d6;letter-spacing:-0.900px;">OK</span>
<span class="t" style="left:1275.00px;top:695.84px;font-size:12px;color:#d6d6d6;letter-spacing:-0.376px;">Cancel</span>
<!-- Effect: Dynamic Range Compression dialog -->
<div style="left:0px;top:283px;width:782px;height:485px;background:#0a0a0a;"></div>
<div style="left:0px;top:284px;width:781px;height:484px;background:#757575;"></div>
<div style="left:0px;top:285px;width:780px;height:483px;background:#434343;"></div>
<div style="left:0px;top:285px;width:780px;height:30px;background:#1f1f1f;"></div>
<div style="left:0px;top:315px;width:780px;height:1px;background:#5c5c5c;"></div>
<span class="t" style="left:294.00px;top:291.84px;font-size:12px;color:#efefef;letter-spacing:-0.143px;">Effect: Dynamic Range Compression</span>
<svg style="left:756px;top:293px" width="16" height="16" viewBox="0 0 16 16"><path d="M2.3,2.3 L13,13 M13,2.3 L2.3,13" stroke="#dadada" stroke-width="1.2" fill="none"/></svg>
<svg style="left:0;top:0" width="1" height="1"><defs><linearGradient id="tg" x1="0" y1="0" x2="0" y2="1"><stop offset="0" stop-color="#8f8f8f"/><stop offset=".55" stop-color="#d8d8d8"/><stop offset="1" stop-color="#ffffff"/></linearGradient></defs></svg>
<div style="left:10px;top:325px;width:760px;height:325px;background:#242424;border:1px solid #505050;box-sizing:border-box;border-radius:1.5px;"></div>
<div style="left:12px;top:327px;width:756px;height:321px;background:#2f2f2f;"></div>
<span class="t" style="left:28.50px;top:342.84px;font-size:12px;color:#d2d2d2;letter-spacing:0.096px;">Output gain</span>
<div style="left:135px;top:349px;width:132px;height:1px;background:#535353;"></div>
<div style="left:134.7px;top:358px;width:1.3px;height:5.8px;background:#f0f0f0;"></div>
<div style="left:266.7px;top:358px;width:1.3px;height:5.8px;background:#f0f0f0;"></div>
<div style="left:200.9px;top:358px;width:1.2px;height:4px;background:#6d6d6d;"></div>
<span class="t" style="left:128.75px;top:367.80px;font-size:9.8px;color:#c8c8c8;letter-spacing:-0.331px;">-30</span>
<span class="t" style="left:262.70px;top:367.80px;font-size:9.8px;color:#c8c8c8;letter-spacing:-0.900px;">30</span>
<svg style="left:195.3px;top:343.9px" width="11" height="14" viewBox="0 0 11 14"><path d="M1.9,1 H9.3 V7.8 L5.6,12.3 L1.9,7.8 Z" fill="#1c1c1c" stroke="#1c1c1c" stroke-width="2"/><path d="M1.9,1 H9.3 V7.8 L5.6,12.3 L1.9,7.8 Z" fill="url(#tg)" stroke="#f8f8f8" stroke-width="1"/></svg>
<span class="t" style="left:282.50px;top:344.94px;font-size:12px;color:#cfcfcf;letter-spacing:-0.636px;">0.0 dB</span>
<div style="left:15px;top:382px;width:750px;height:1px;background:#4f4f4f;"></div>
<span class="t" style="left:33.50px;top:387.84px;font-size:12px;color:#d2d2d2;letter-spacing:0.117px;">Limiter</span>
<span class="t" style="left:38.10px;top:407.84px;font-size:12px;color:#d2d2d2;letter-spacing:-0.218px;">Threshold</span>
<div style="left:50px;top:434px;width:132px;height:1px;background:#535353;"></div>
<div style="left:49.7px;top:443px;width:1.3px;height:5.8px;background:#f0f0f0;"></div>
<div style="left:181.7px;top:443px;width:1.3px;height:5.8px;background:#f0f0f0;"></div>
<div style="left:115.9px;top:443px;width:1.2px;height:4px;background:#6d6d6d;"></div>
<span class="t" style="left:41.25px;top:452.80px;font-size:9.8px;color:#c8c8c8;letter-spacing:-0.367px;">-120</span>
<span class="t" style="left:180.10px;top:452.80px;font-size:9.8px;color:#c8c8c8;">0</span>
<svg style="left:176px;top:428.9px" width="11" height="14" viewBox="0 0 11 14"><path d="M1.9,1 H9.3 V7.8 L5.6,12.3 L1.9,7.8 Z" fill="#1c1c1c" stroke="#1c1c1c" stroke-width="2"/><path d="M1.9,1 H9.3 V7.8 L5.6,12.3 L1.9,7.8 Z" fill="url(#tg)" stroke="#f8f8f8" stroke-width="1"/></svg>
<span class="t" style="left:200.50px;top:429.94px;font-size:12px;color:#cfcfcf;letter-spacing:-0.536px;">0.0 dB</span>
<span class="t" style="left:38.10px;top:467.84px;font-size:12px;color:#d2d2d2;letter-spacing:-0.355px;">Ratio</span>
<div style="left:50px;top:494px;width:132px;height:1px;background:#535353;"></div>
<div style="left:49.7px;top:503px;width:1.3px;height:5.8px;background:#f0f0f0;"></div>
<div style="left:181.7px;top:503px;width:1.3px;height:5.8px;background:#f0f0f0;"></div>
<div style="left:115.9px;top:503px;width:1.2px;height:4px;background:#6d6d6d;"></div>
<span class="t" style="left:48.30px;top:512.80px;font-size:9.8px;color:#c8c8c8;">1</span>
<span class="t" style="left:177.70px;top:512.80px;font-size:9.8px;color:#c8c8c8;letter-spacing:-0.900px;">30</span>
<svg style="left:44.5px;top:488.9px" width="11" height="14" viewBox="0 0 11 14"><path d="M1.9,1 H9.3 V7.8 L5.6,12.3 L1.9,7.8 Z" fill="#1c1c1c" stroke="#1c1c1c" stroke-width="2"/><path d="M1.9,1 H9.3 V7.8 L5.6,12.3 L1.9,7.8 Z" fill="url(#tg)" stroke="#f8f8f8" stroke-width="1"/></svg>
<span class="t" style="left:197.00px;top:489.94px;font-size:12px;color:#cfcfcf;letter-spacing:-0.583px;">1.0 x:1</span>
<span class="t" style="left:38.10px;top:527.84px;font-size:12px;color:#d2d2d2;letter-spacing:0.056px;">Attack</span>
<div style="left:50px;top:554px;width:132px;height:1px;background:#535353;"></div>
<div style="left:49.7px;top:563px;width:1.3px;height:5.8px;background:#f0f0f0;"></div>
<div style="left:181.7px;top:563px;width:1.3px;height:5.8px;background:#f0f0f0;"></div>
<div style="left:115.9px;top:563px;width:1.2px;height:4px;background:#6d6d6d;"></div>
<span class="t" style="left:48.10px;top:572.80px;font-size:9.8px;color:#c8c8c8;">0</span>
<span class="t" style="left:175.20px;top:572.80px;font-size:9.8px;color:#c8c8c8;letter-spacing:-0.883px;">500</span>
<svg style="left:45.8px;top:548.9px" width="11" height="14" viewBox="0 0 11 14"><path d="M1.9,1 H9.3 V7.8 L5.6,12.3 L1.9,7.8 Z" fill="#1c1c1c" stroke="#1c1c1c" stroke-width="2"/><path d="M1.9,1 H9.3 V7.8 L5.6,12.3 L1.9,7.8 Z" fill="url(#tg)" stroke="#f8f8f8" stroke-width="1"/></svg>
<span class="t" style="left:199.50px;top:549.94px;font-size:12px;color:#cfcfcf;letter-spacing:-0.540px;">5.0 ms</span>
<span class="t" style="left:38.10px;top:587.84px;font-size:12px;color:#d2d2d2;letter-spacing:-0.840px;">Release</span>
<div style="left:50px;top:614px;width:132px;height:1px;background:#535353;"></div>
<div style="left:49.7px;top:623px;width:1.3px;height:5.8px;background:#f0f0f0;"></div>
<div style="left:181.7px;top:623px;width:1.3px;height:5.8px;background:#f0f0f0;"></div>
<div style="left:115.9px;top:623px;width:1.2px;height:4px;background:#6d6d6d;"></div>
<span class="t" style="left:48.10px;top:632.80px;font-size:9.8px;color:#c8c8c8;">0</span>
<span class="t" style="left:172.60px;top:632.80px;font-size:9.8px;color:#c8c8c8;letter-spacing:-0.668px;">5000</span>
<svg style="left:47.3px;top:608.9px" width="11" height="14" viewBox="0 0 11 14"><path d="M1.9,1 H9.3 V7.8 L5.6,12.3 L1.9,7.8 Z" fill="#1c1c1c" stroke="#1c1c1c" stroke-width="2"/><path d="M1.9,1 H9.3 V7.8 L5.6,12.3 L1.9,7.8 Z" fill="url(#tg)" stroke="#f8f8f8" stroke-width="1"/></svg>
<span class="t" style="left:195.50px;top:609.94px;font-size:12px;color:#cfcfcf;letter-spacing:-0.672px;">100 ms</span>
<span class="t" style="left:287.50px;top:387.84px;font-size:12px;color:#d2d2d2;letter-spacing:-0.227px;">Compressor</span>
<span class="t" style="left:292.10px;top:407.84px;font-size:12px;color:#d2d2d2;letter-spacing:-0.217px;">Threshold</span>
<div style="left:304px;top:434px;width:132px;height:1px;background:#535353;"></div>
<div style="left:303.7px;top:443px;width:1.3px;height:5.8px;background:#f0f0f0;"></div>
<div style="left:435.7px;top:443px;width:1.3px;height:5.8px;background:#f0f0f0;"></div>
<div style="left:369.9px;top:443px;width:1.2px;height:4px;background:#6d6d6d;"></div>
<span class="t" style="left:295.25px;top:452.80px;font-size:9.8px;color:#c8c8c8;letter-spacing:-0.367px;">-120</span>
<span class="t" style="left:434.10px;top:452.80px;font-size:9.8px;color:#c8c8c8;">0</span>
<svg style="left:430px;top:428.9px" width="11" height="14" viewBox="0 0 11 14"><path d="M1.9,1 H9.3 V7.8 L5.6,12.3 L1.9,7.8 Z" fill="#1c1c1c" stroke="#1c1c1c" stroke-width="2"/><path d="M1.9,1 H9.3 V7.8 L5.6,12.3 L1.9,7.8 Z" fill="url(#tg)" stroke="#f8f8f8" stroke-width="1"/></svg>
<span class="t" style="left:454.50px;top:429.94px;font-size:12px;color:#cfcfcf;letter-spacing:-0.536px;">0.0 dB</span>
<span class="t" style="left:292.10px;top:467.84px;font-size:12px;color:#d2d2d2;letter-spacing:-0.355px;">Ratio</span>
<div style="left:304px;top:494px;width:132px;height:1px;background:#535353;"></div>
<div style="left:303.7px;top:503px;width:1.3px;height:5.8px;background:#f0f0f0;"></div>
<div style="left:435.7px;top:503px;width:1.3px;height:5.8px;background:#f0f0f0;"></div>
<div style="left:369.9px;top:503px;width:1.2px;height:4px;background:#6d6d6d;"></div>
<span class="t" style="left:302.30px;top:512.80px;font-size:9.8px;color:#c8c8c8;">1</span>
<span class="t" style="left:431.70px;top:512.80px;font-size:9.8px;color:#c8c8c8;letter-spacing:-0.900px;">30</span>
<svg style="left:298.5px;top:488.9px" width="11" height="14" viewBox="0 0 11 14"><path d="M1.9,1 H9.3 V7.8 L5.6,12.3 L1.9,7.8 Z" fill="#1c1c1c" stroke="#1c1c1c" stroke-width="2"/><path d="M1.9,1 H9.3 V7.8 L5.6,12.3 L1.9,7.8 Z" fill="url(#tg)" stroke="#f8f8f8" stroke-width="1"/></svg>
<span class="t" style="left:451.00px;top:489.94px;font-size:12px;color:#cfcfcf;letter-spacing:-0.583px;">1.0 x:1</span>
<span class="t" style="left:292.10px;top:527.84px;font-size:12px;color:#d2d2d2;letter-spacing:0.056px;">Attack</span>
<div style="left:304px;top:554px;width:132px;height:1px;background:#535353;"></div>
<div style="left:303.7px;top:563px;width:1.3px;height:5.8px;background:#f0f0f0;"></div>
<div style="left:435.7px;top:563px;width:1.3px;height:5.8px;background:#f0f0f0;"></div>
<div style="left:369.9px;top:563px;width:1.2px;height:4px;background:#6d6d6d;"></div>
<span class="t" style="left:302.10px;top:572.80px;font-size:9.8px;color:#c8c8c8;">0</span>
<span class="t" style="left:429.20px;top:572.80px;font-size:9.8px;color:#c8c8c8;letter-spacing:-0.883px;">500</span>
<svg style="left:301.3px;top:548.9px" width="11" height="14" viewBox="0 0 11 14"><path d="M1.9,1 H9.3 V7.8 L5.6,12.3 L1.9,7.8 Z" fill="#1c1c1c" stroke="#1c1c1c" stroke-width="2"/><path d="M1.9,1 H9.3 V7.8 L5.6,12.3 L1.9,7.8 Z" fill="url(#tg)" stroke="#f8f8f8" stroke-width="1"/></svg>
<span class="t" style="left:450.50px;top:549.94px;font-size:12px;color:#cfcfcf;letter-spacing:-0.560px;">10.0 ms</span>
<span class="t" style="left:292.10px;top:587.84px;font-size:12px;color:#d2d2d2;letter-spacing:-0.840px;">Release</span>
<div style="left:304px;top:614px;width:132px;height:1px;background:#535353;"></div>
<div style="left:303.7px;top:623px;width:1.3px;height:5.8px;background:#f0f0f0;"></div>
<div style="left:435.7px;top:623px;width:1.3px;height:5.8px;background:#f0f0f0;"></div>
<div style="left:369.9px;top:623px;width:1.2px;height:4px;background:#6d6d6d;"></div>
<span class="t" style="left:302.10px;top:632.80px;font-size:9.8px;color:#c8c8c8;">0</span>
<span class="t" style="left:426.60px;top:632.80px;font-size:9.8px;color:#c8c8c8;letter-spacing:-0.668px;">5000</span>
<svg style="left:301.3px;top:608.9px" width="11" height="14" viewBox="0 0 11 14"><path d="M1.9,1 H9.3 V7.8 L5.6,12.3 L1.9,7.8 Z" fill="#1c1c1c" stroke="#1c1c1c" stroke-width="2"/><path d="M1.9,1 H9.3 V7.8 L5.6,12.3 L1.9,7.8 Z" fill="url(#tg)" stroke="#f8f8f8" stroke-width="1"/></svg>
<span class="t" style="left:449.50px;top:609.94px;font-size:12px;color:#cfcfcf;letter-spacing:-0.672px;">100 ms</span>
<span class="t" style="left:541.50px;top:387.84px;font-size:12px;color:#d2d2d2;letter-spacing:-0.267px;">Gate/Expander</span>
<span class="t" style="left:546.10px;top:407.84px;font-size:12px;color:#d2d2d2;letter-spacing:-0.217px;">Threshold</span>
<div style="left:558px;top:434px;width:132px;height:1px;background:#535353;"></div>
<div style="left:557.7px;top:443px;width:1.3px;height:5.8px;background:#f0f0f0;"></div>
<div style="left:689.7px;top:443px;width:1.3px;height:5.8px;background:#f0f0f0;"></div>
<div style="left:623.9px;top:443px;width:1.2px;height:4px;background:#6d6d6d;"></div>
<span class="t" style="left:549.25px;top:452.80px;font-size:9.8px;color:#c8c8c8;letter-spacing:-0.367px;">-120</span>
<span class="t" style="left:688.10px;top:452.80px;font-size:9.8px;color:#c8c8c8;">0</span>
<svg style="left:552.5px;top:428.9px" width="11" height="14" viewBox="0 0 11 14"><path d="M1.9,1 H9.3 V7.8 L5.6,12.3 L1.9,7.8 Z" fill="#1c1c1c" stroke="#1c1c1c" stroke-width="2"/><path d="M1.9,1 H9.3 V7.8 L5.6,12.3 L1.9,7.8 Z" fill="url(#tg)" stroke="#f8f8f8" stroke-width="1"/></svg>
<span class="t" style="left:700.30px;top:429.94px;font-size:12px;color:#cfcfcf;letter-spacing:-0.440px;">-120.0 dB</span>
<span class="t" style="left:546.10px;top:467.84px;font-size:12px;color:#d2d2d2;letter-spacing:-0.355px;">Ratio</span>
<div style="left:558px;top:494px;width:132px;height:1px;background:#535353;"></div>
<div style="left:557.7px;top:503px;width:1.3px;height:5.8px;background:#f0f0f0;"></div>
<div style="left:689.7px;top:503px;width:1.3px;height:5.8px;background:#f0f0f0;"></div>
<div style="left:623.9px;top:503px;width:1.2px;height:4px;background:#6d6d6d;"></div>
<span class="t" style="left:556.30px;top:512.80px;font-size:9.8px;color:#c8c8c8;">1</span>
<span class="t" style="left:685.70px;top:512.80px;font-size:9.8px;color:#c8c8c8;letter-spacing:-0.900px;">30</span>
<svg style="left:552.5px;top:488.9px" width="11" height="14" viewBox="0 0 11 14"><path d="M1.9,1 H9.3 V7.8 L5.6,12.3 L1.9,7.8 Z" fill="#1c1c1c" stroke="#1c1c1c" stroke-width="2"/><path d="M1.9,1 H9.3 V7.8 L5.6,12.3 L1.9,7.8 Z" fill="url(#tg)" stroke="#f8f8f8" stroke-width="1"/></svg>
<span class="t" style="left:705.00px;top:489.94px;font-size:12px;color:#cfcfcf;letter-spacing:-0.583px;">1.0 x:1</span>
<span class="t" style="left:546.10px;top:527.84px;font-size:12px;color:#d2d2d2;letter-spacing:0.056px;">Attack</span>
<div style="left:558px;top:554px;width:132px;height:1px;background:#535353;"></div>
<div style="left:557.7px;top:563px;width:1.3px;height:5.8px;background:#f0f0f0;"></div>
<div style="left:689.7px;top:563px;width:1.3px;height:5.8px;background:#f0f0f0;"></div>
<div style="left:623.9px;top:563px;width:1.2px;height:4px;background:#6d6d6d;"></div>
<span class="t" style="left:556.10px;top:572.80px;font-size:9.8px;color:#c8c8c8;">0</span>
<span class="t" style="left:683.20px;top:572.80px;font-size:9.8px;color:#c8c8c8;letter-spacing:-0.883px;">500</span>
<svg style="left:555.3px;top:548.9px" width="11" height="14" viewBox="0 0 11 14"><path d="M1.9,1 H9.3 V7.8 L5.6,12.3 L1.9,7.8 Z" fill="#1c1c1c" stroke="#1c1c1c" stroke-width="2"/><path d="M1.9,1 H9.3 V7.8 L5.6,12.3 L1.9,7.8 Z" fill="url(#tg)" stroke="#f8f8f8" stroke-width="1"/></svg>
<span class="t" style="left:704.50px;top:549.94px;font-size:12px;color:#cfcfcf;letter-spacing:-0.560px;">10.0 ms</span>
<span class="t" style="left:546.10px;top:587.84px;font-size:12px;color:#d2d2d2;letter-spacing:-0.840px;">Release</span>
<div style="left:558px;top:614px;width:132px;height:1px;background:#535353;"></div>
<div style="left:557.7px;top:623px;width:1.3px;height:5.8px;background:#f0f0f0;"></div>
<div style="left:689.7px;top:623px;width:1.3px;height:5.8px;background:#f0f0f0;"></div>
<div style="left:623.9px;top:623px;width:1.2px;height:4px;background:#6d6d6d;"></div>
<span class="t" style="left:556.10px;top:632.80px;font-size:9.8px;color:#c8c8c8;">0</span>
<span class="t" style="left:680.60px;top:632.80px;font-size:9.8px;color:#c8c8c8;letter-spacing:-0.668px;">5000</span>
<svg style="left:555.3px;top:608.9px" width="11" height="14" viewBox="0 0 11 14"><path d="M1.9,1 H9.3 V7.8 L5.6,12.3 L1.9,7.8 Z" fill="#1c1c1c" stroke="#1c1c1c" stroke-width="2"/><path d="M1.9,1 H9.3 V7.8 L5.6,12.3 L1.9,7.8 Z" fill="url(#tg)" stroke="#f8f8f8" stroke-width="1"/></svg>
<span class="t" style="left:703.50px;top:609.94px;font-size:12px;color:#cfcfcf;letter-spacing:-0.672px;">100 ms</span>
<div style="left:262px;top:393px;width:1px;height:248px;background:#494949;"></div>
<div style="left:516px;top:393px;width:1px;height:248px;background:#494949;"></div>
<span class="t" style="left:26.50px;top:663.84px;font-size:12px;color:#d2d2d2;letter-spacing:-0.431px;">Preview:</span>
<svg style="left:25px;top:684px" width="140" height="18" viewBox="0 0 140 18">
<circle cx="9" cy="9" r="7.5" fill="#3b3b3b" stroke="#b6b6b6" stroke-width="1"/><circle cx="9" cy="9" r="4.4" fill="#c9c9c9"/>
<circle cx="128.8" cy="9" r="7.5" fill="#575757" stroke="#a2a2a2" stroke-width="1"/>
</svg>
<span class="t" style="left:46.50px;top:688.34px;font-size:12px;color:#d2d2d2;letter-spacing:-0.017px;">Applied result</span>
<span class="t" style="left:166.50px;top:688.34px;font-size:12px;color:#d2d2d2;">Original audio</span>
<div style="left:640px;top:686px;width:121.5px;height:23.5px;background:#383838;border:1px solid #212121;box-sizing:border-box;border-radius:3.5px;box-shadow:inset 0 1px 0 #4a4a4a;"></div>
<span class="t" style="left:693.00px;top:691.99px;font-size:12px;color:#d6d6d6;letter-spacing:-0.370px;">Preview</span>
<svg style="left:646px;top:688px" width="20" height="20" viewBox="0 0 20 20">
<circle cx="10.4" cy="10.5" r="8.2" fill="none" stroke="#d6d6d6" stroke-width="1.2"/><polygon points="7.9,5.4 15.6,10.6 7.9,16" fill="#c2c2c2"/></svg>
<div style="left:15px;top:721.8px;width:750px;height:1px;background:#2a2a2a;"></div>
<div style="left:15px;top:722.8px;width:750px;height:1px;background:#545454;"></div>
<div style="left:18px;top:734px;width:121.5px;height:23.5px;background:#383838;border:1px solid #212121;box-sizing:border-box;border-radius:3.5px;box-shadow:inset 0 1px 0 #4a4a4a;"></div>
<span class="t" style="left:65.30px;top:739.99px;font-size:12px;color:#d6d6d6;letter-spacing:-0.900px;">Reset</span>
<div style="left:508px;top:734px;width:121.5px;height:23.5px;background:#383838;border:1px solid #212121;box-sizing:border-box;border-radius:3.5px;box-shadow:inset 0 1px 0 #4a4a4a;"></div>
<span class="t" style="left:553.00px;top:739.99px;font-size:12px;color:#d6d6d6;letter-spacing:0.250px;">Apply</span>
<div style="left:640px;top:734px;width:121.5px;height:23.5px;background:#383838;border:1px solid #212121;box-sizing:border-box;border-radius:3.5px;box-shadow:inset 0 1px 0 #4a4a4a;"></div>
<span class="t" style="left:683.00px;top:739.99px;font-size:12px;color:#d6d6d6;letter-spacing:-0.376px;">Cancel</span>
</div></body></html>
